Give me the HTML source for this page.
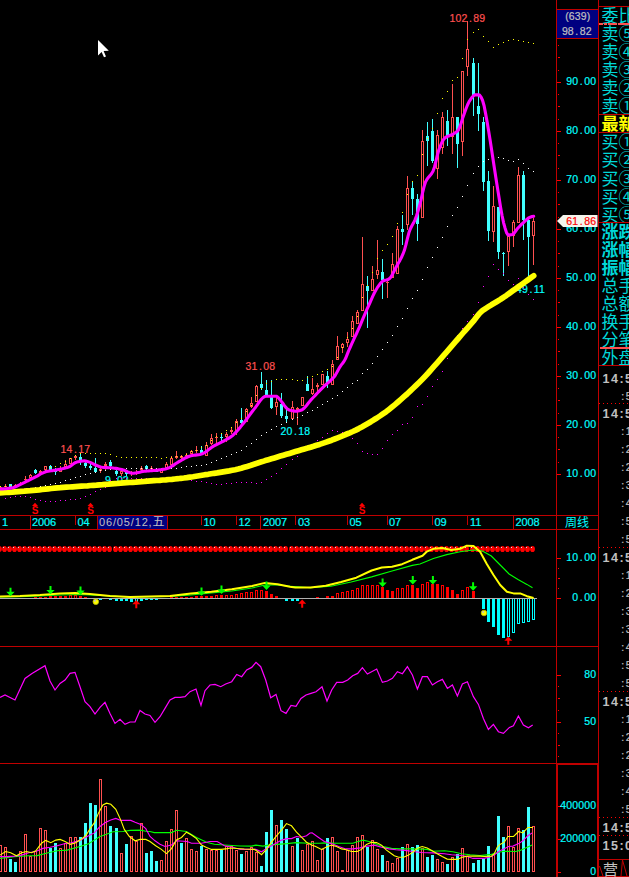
<!DOCTYPE html>
<html lang="zh"><head><meta charset="utf-8"><title>周线</title>
<style>
html,body{margin:0;padding:0;background:#000;}
body{width:629px;height:877px;overflow:hidden;}
svg{display:block;}
text{font-family:"Liberation Sans","Noto Sans CJK SC",sans-serif;}
.ax{font-family:"Liberation Sans","Noto Sans CJK SC",sans-serif;letter-spacing:0.15px;}
.vx{letter-spacing:0;}
.tx{letter-spacing:-0.15px;}
.lab{font-family:"Liberation Sans","Noto Sans CJK SC",sans-serif;letter-spacing:0.15px;}
.cjk{font-family:"Liberation Sans","Noto Sans CJK SC",sans-serif;}
.song{font-family:"Liberation Sans","Noto Sans CJK SC",sans-serif;}
</style></head><body>
<svg width="629" height="877" viewBox="0 0 629 877" shape-rendering="crispEdges">
<rect x="0" y="0" width="629" height="877" fill="#000" />
<g id="main">
<text x="105" y="484" fill="#00FFFF" font-size="10.5" text-anchor="start" class="lab"  stroke="#00FFFF" stroke-width="0.2">9<tspan dx="1.4">.</tspan><tspan dx="1.4">02</tspan></text>
<text x="516" y="293" fill="#00FFFF" font-size="10.5" text-anchor="start" class="lab"  stroke="#00FFFF" stroke-width="0.2">49<tspan dx="1.4">.</tspan><tspan dx="1.4">11</tspan></text>
<rect x="0" y="486" width="1" height="1" fill="#FF5050" />
<rect x="-1" y="487" width="3" height="2" fill="#FF5050" />
<rect x="5" y="484" width="1" height="2" fill="#FF5050" />
<rect x="4" y="486" width="3" height="1" fill="#FF5050" />
<rect x="10" y="484" width="1" height="3" fill="#40FFFF" />
<rect x="9" y="484" width="3" height="3" fill="#40FFFF" />
<rect x="15" y="484" width="1" height="1" fill="#FF5050" />
<rect x="14" y="485" width="3" height="2" fill="#FF5050" />
<rect x="20" y="482" width="1" height="2" fill="#FF5050" />
<rect x="19" y="484" width="3" height="1" fill="#FF5050" />
<rect x="25" y="476" width="1" height="3" fill="#FF5050" />
<rect x="25" y="480" width="1" height="2" fill="#FF5050" />
<rect x="24" y="479" width="3" height="1" fill="#FF5050" />
<rect x="30" y="474" width="1" height="1" fill="#FF5050" />
<rect x="30" y="478" width="1" height="1" fill="#FF5050" />
<rect x="29.5" y="475.5" width="2" height="2" fill="#000" stroke="#FF5050" stroke-width="1"/>
<rect x="35" y="469" width="1" height="5" fill="#40FFFF" />
<rect x="34" y="470" width="3" height="3" fill="#40FFFF" />
<rect x="40" y="470" width="1" height="1" fill="#FF5050" />
<rect x="40" y="473" width="1" height="1" fill="#FF5050" />
<rect x="39" y="471" width="3" height="2" fill="#FF5050" />
<rect x="44.5" y="466.5" width="2" height="3" fill="#000" stroke="#FF5050" stroke-width="1"/>
<rect x="50" y="465" width="1" height="5" fill="#40FFFF" />
<rect x="49" y="466" width="3" height="4" fill="#40FFFF" />
<rect x="55" y="468" width="1" height="7" fill="#40FFFF" />
<rect x="54" y="470" width="3" height="2" fill="#40FFFF" />
<rect x="60" y="466" width="1" height="2" fill="#FF5050" />
<rect x="59.5" y="468.5" width="2" height="3" fill="#000" stroke="#FF5050" stroke-width="1"/>
<rect x="65" y="460" width="1" height="4" fill="#FF5050" />
<rect x="64.5" y="464.5" width="2" height="2" fill="#000" stroke="#FF5050" stroke-width="1"/>
<rect x="69.5" y="458.5" width="2" height="5" fill="#000" stroke="#FF5050" stroke-width="1"/>
<rect x="75" y="455" width="1" height="1" fill="#FF5050" />
<rect x="75" y="458" width="1" height="2" fill="#FF5050" />
<rect x="74" y="456" width="3" height="2" fill="#FF5050" />
<rect x="80" y="453" width="1" height="12" fill="#40FFFF" />
<rect x="79" y="457" width="3" height="3" fill="#40FFFF" />
<rect x="85" y="461" width="1" height="7" fill="#40FFFF" />
<rect x="84" y="463" width="3" height="3" fill="#40FFFF" />
<rect x="90" y="464" width="1" height="6" fill="#40FFFF" />
<rect x="89" y="466" width="3" height="2" fill="#40FFFF" />
<rect x="95" y="458" width="1" height="15" fill="#40FFFF" />
<rect x="94" y="468" width="3" height="4" fill="#40FFFF" />
<rect x="100" y="468" width="1" height="1" fill="#FF5050" />
<rect x="100" y="471" width="1" height="2" fill="#FF5050" />
<rect x="99" y="469" width="3" height="2" fill="#FF5050" />
<rect x="105" y="462" width="1" height="2" fill="#FF5050" />
<rect x="105" y="466" width="1" height="5" fill="#FF5050" />
<rect x="104" y="464" width="3" height="2" fill="#FF5050" />
<rect x="110" y="460" width="1" height="7" fill="#40FFFF" />
<rect x="109" y="462" width="3" height="4" fill="#40FFFF" />
<rect x="116" y="470" width="1" height="6" fill="#40FFFF" />
<rect x="115" y="471" width="3" height="3" fill="#40FFFF" />
<rect x="121" y="470" width="1" height="1" fill="#FF5050" />
<rect x="121" y="474" width="1" height="2" fill="#FF5050" />
<rect x="120.5" y="471.5" width="2" height="2" fill="#000" stroke="#FF5050" stroke-width="1"/>
<rect x="126" y="470" width="1" height="6" fill="#40FFFF" />
<rect x="125" y="471" width="3" height="3" fill="#40FFFF" />
<rect x="131" y="471" width="1" height="1" fill="#FF5050" />
<rect x="131" y="474" width="1" height="2" fill="#FF5050" />
<rect x="130" y="472" width="3" height="2" fill="#FF5050" />
<rect x="136" y="470" width="1" height="2" fill="#FF5050" />
<rect x="136" y="474" width="1" height="1" fill="#FF5050" />
<rect x="135" y="472" width="3" height="2" fill="#FF5050" />
<rect x="141" y="466" width="1" height="2" fill="#FF5050" />
<rect x="141" y="470" width="1" height="1" fill="#FF5050" />
<rect x="140" y="468" width="3" height="2" fill="#FF5050" />
<rect x="146" y="465" width="1" height="5" fill="#40FFFF" />
<rect x="145" y="466" width="3" height="3" fill="#40FFFF" />
<rect x="151" y="466" width="1" height="2" fill="#FF5050" />
<rect x="151" y="469" width="1" height="1" fill="#FF5050" />
<rect x="150" y="468" width="3" height="1" fill="#FF5050" />
<rect x="156" y="468" width="1" height="4" fill="#40FFFF" />
<rect x="155" y="470" width="3" height="2" fill="#40FFFF" />
<rect x="161" y="469" width="1" height="1" fill="#FF5050" />
<rect x="160.5" y="470.5" width="2" height="2" fill="#000" stroke="#FF5050" stroke-width="1"/>
<rect x="166" y="462" width="1" height="2" fill="#FF5050" />
<rect x="165.5" y="464.5" width="2" height="3" fill="#000" stroke="#FF5050" stroke-width="1"/>
<rect x="171" y="456" width="1" height="2" fill="#FF5050" />
<rect x="170.5" y="458.5" width="2" height="6" fill="#000" stroke="#FF5050" stroke-width="1"/>
<rect x="176" y="451" width="1" height="5" fill="#FF5050" />
<rect x="176" y="458" width="1" height="1" fill="#FF5050" />
<rect x="175" y="456" width="3" height="2" fill="#FF5050" />
<rect x="181" y="455" width="1" height="1" fill="#FF5050" />
<rect x="181" y="458" width="1" height="2" fill="#FF5050" />
<rect x="180" y="456" width="3" height="2" fill="#FF5050" />
<rect x="186" y="453" width="1" height="2" fill="#FF5050" />
<rect x="186" y="456" width="1" height="1" fill="#FF5050" />
<rect x="185" y="455" width="3" height="1" fill="#FF5050" />
<rect x="191" y="450" width="1" height="1" fill="#FF5050" />
<rect x="191" y="454" width="1" height="1" fill="#FF5050" />
<rect x="190.5" y="451.5" width="2" height="2" fill="#000" stroke="#FF5050" stroke-width="1"/>
<rect x="196" y="446" width="1" height="4" fill="#FF5050" />
<rect x="196" y="451" width="1" height="2" fill="#FF5050" />
<rect x="195" y="450" width="3" height="1" fill="#FF5050" />
<rect x="201" y="446" width="1" height="7" fill="#40FFFF" />
<rect x="200" y="450" width="3" height="3" fill="#40FFFF" />
<rect x="206" y="442" width="1" height="3" fill="#FF5050" />
<rect x="205.5" y="445.5" width="2" height="10" fill="#000" stroke="#FF5050" stroke-width="1"/>
<rect x="211" y="434" width="1" height="4" fill="#FF5050" />
<rect x="211" y="444" width="1" height="1" fill="#FF5050" />
<rect x="210.5" y="438.5" width="2" height="5" fill="#000" stroke="#FF5050" stroke-width="1"/>
<rect x="216" y="433" width="1" height="4" fill="#FF5050" />
<rect x="216" y="438" width="1" height="5" fill="#FF5050" />
<rect x="215" y="437" width="3" height="1" fill="#FF5050" />
<rect x="221" y="433" width="1" height="8" fill="#40FFFF" />
<rect x="220" y="437" width="3" height="1" fill="#40FFFF" />
<rect x="226" y="432" width="1" height="2" fill="#FF5050" />
<rect x="226" y="437" width="1" height="5" fill="#FF5050" />
<rect x="225.5" y="434.5" width="2" height="2" fill="#000" stroke="#FF5050" stroke-width="1"/>
<rect x="231" y="427" width="1" height="3" fill="#FF5050" />
<rect x="231" y="432" width="1" height="2" fill="#FF5050" />
<rect x="230" y="430" width="3" height="2" fill="#FF5050" />
<rect x="236" y="419" width="1" height="2" fill="#FF5050" />
<rect x="236" y="432" width="1" height="3" fill="#FF5050" />
<rect x="235.5" y="421.5" width="2" height="10" fill="#000" stroke="#FF5050" stroke-width="1"/>
<rect x="241" y="408" width="1" height="18" fill="#40FFFF" />
<rect x="240" y="420" width="3" height="3" fill="#40FFFF" />
<rect x="246" y="408" width="1" height="1" fill="#FF5050" />
<rect x="245.5" y="409.5" width="2" height="12" fill="#000" stroke="#FF5050" stroke-width="1"/>
<rect x="251" y="397" width="1" height="6" fill="#FF5050" />
<rect x="251" y="407" width="1" height="1" fill="#FF5050" />
<rect x="250.5" y="403.5" width="2" height="3" fill="#000" stroke="#FF5050" stroke-width="1"/>
<rect x="256" y="385" width="1" height="1" fill="#FF5050" />
<rect x="255.5" y="386.5" width="2" height="15" fill="#000" stroke="#FF5050" stroke-width="1"/>
<rect x="261" y="372" width="1" height="18" fill="#40FFFF" />
<rect x="260" y="384" width="3" height="4" fill="#40FFFF" />
<rect x="266" y="380" width="1" height="15" fill="#40FFFF" />
<rect x="265" y="390" width="3" height="5" fill="#40FFFF" />
<rect x="271" y="380" width="1" height="29" fill="#40FFFF" />
<rect x="270" y="397" width="3" height="11" fill="#40FFFF" />
<rect x="276" y="398" width="1" height="4" fill="#FF5050" />
<rect x="276" y="407" width="1" height="8" fill="#FF5050" />
<rect x="275.5" y="402.5" width="2" height="4" fill="#000" stroke="#FF5050" stroke-width="1"/>
<rect x="281" y="393" width="1" height="25" fill="#40FFFF" />
<rect x="280" y="404" width="3" height="12" fill="#40FFFF" />
<rect x="286" y="410" width="1" height="13" fill="#40FFFF" />
<rect x="285" y="416" width="3" height="3" fill="#40FFFF" />
<rect x="292" y="401" width="1" height="6" fill="#FF5050" />
<rect x="291.5" y="407.5" width="2" height="11" fill="#000" stroke="#FF5050" stroke-width="1"/>
<rect x="297" y="407" width="1" height="1" fill="#FF5050" />
<rect x="297" y="410" width="1" height="15" fill="#FF5050" />
<rect x="296" y="408" width="3" height="2" fill="#FF5050" />
<rect x="301.5" y="397.5" width="2" height="8" fill="#000" stroke="#FF5050" stroke-width="1"/>
<rect x="307" y="376" width="1" height="15" fill="#40FFFF" />
<rect x="306" y="384" width="3" height="7" fill="#40FFFF" />
<rect x="312" y="378" width="1" height="11" fill="#FF5050" />
<rect x="312" y="394" width="1" height="1" fill="#FF5050" />
<rect x="311.5" y="389.5" width="2" height="4" fill="#000" stroke="#FF5050" stroke-width="1"/>
<rect x="317" y="383" width="1" height="2" fill="#FF5050" />
<rect x="317" y="387" width="1" height="5" fill="#FF5050" />
<rect x="316" y="385" width="3" height="2" fill="#FF5050" />
<rect x="322" y="374" width="1" height="1" fill="#FF5050" />
<rect x="321.5" y="374.5" width="2" height="10" fill="#000" stroke="#FF5050" stroke-width="1"/>
<rect x="327" y="371" width="1" height="17" fill="#40FFFF" />
<rect x="326" y="376" width="3" height="7" fill="#40FFFF" />
<rect x="332" y="360" width="1" height="4" fill="#FF5050" />
<rect x="331.5" y="364.5" width="2" height="20" fill="#000" stroke="#FF5050" stroke-width="1"/>
<rect x="337" y="336" width="1" height="10" fill="#FF5050" />
<rect x="336.5" y="346.5" width="2" height="13" fill="#000" stroke="#FF5050" stroke-width="1"/>
<rect x="342" y="343" width="1" height="1" fill="#FF5050" />
<rect x="342" y="348" width="1" height="5" fill="#FF5050" />
<rect x="341.5" y="344.5" width="2" height="3" fill="#000" stroke="#FF5050" stroke-width="1"/>
<rect x="347" y="332" width="1" height="7" fill="#FF5050" />
<rect x="347" y="343" width="1" height="4" fill="#FF5050" />
<rect x="346.5" y="339.5" width="2" height="3" fill="#000" stroke="#FF5050" stroke-width="1"/>
<rect x="352" y="316" width="1" height="5" fill="#FF5050" />
<rect x="351.5" y="321.5" width="2" height="15" fill="#000" stroke="#FF5050" stroke-width="1"/>
<rect x="357" y="310" width="1" height="2" fill="#FF5050" />
<rect x="356.5" y="312.5" width="2" height="11" fill="#000" stroke="#FF5050" stroke-width="1"/>
<rect x="362" y="237" width="1" height="47" fill="#FF5050" />
<rect x="361.5" y="284.5" width="2" height="26" fill="#000" stroke="#FF5050" stroke-width="1"/>
<rect x="367" y="276" width="1" height="52" fill="#40FFFF" />
<rect x="366" y="286" width="3" height="5" fill="#40FFFF" />
<rect x="372" y="266" width="1" height="13" fill="#FF5050" />
<rect x="371.5" y="279.5" width="2" height="11" fill="#000" stroke="#FF5050" stroke-width="1"/>
<rect x="377" y="240" width="1" height="30" fill="#FF5050" />
<rect x="377" y="275" width="1" height="4" fill="#FF5050" />
<rect x="376.5" y="270.5" width="2" height="4" fill="#000" stroke="#FF5050" stroke-width="1"/>
<rect x="382" y="259" width="1" height="40" fill="#40FFFF" />
<rect x="381" y="272" width="3" height="8" fill="#40FFFF" />
<rect x="387" y="280" width="1" height="2" fill="#FF5050" />
<rect x="387" y="283" width="1" height="15" fill="#FF5050" />
<rect x="386" y="282" width="3" height="1" fill="#FF5050" />
<rect x="392" y="253" width="1" height="11" fill="#FF5050" />
<rect x="391.5" y="264.5" width="2" height="13" fill="#000" stroke="#FF5050" stroke-width="1"/>
<rect x="397" y="226" width="1" height="3" fill="#FF5050" />
<rect x="396.5" y="229.5" width="2" height="44" fill="#000" stroke="#FF5050" stroke-width="1"/>
<rect x="402" y="215" width="1" height="30" fill="#40FFFF" />
<rect x="401" y="229" width="3" height="3" fill="#40FFFF" />
<rect x="407" y="176" width="1" height="12" fill="#FF5050" />
<rect x="407" y="225" width="1" height="5" fill="#FF5050" />
<rect x="406.5" y="188.5" width="2" height="36" fill="#000" stroke="#FF5050" stroke-width="1"/>
<rect x="412" y="181" width="1" height="34" fill="#40FFFF" />
<rect x="411" y="188" width="3" height="11" fill="#40FFFF" />
<rect x="417" y="194" width="1" height="47" fill="#40FFFF" />
<rect x="416" y="199" width="3" height="25" fill="#40FFFF" />
<rect x="422" y="130" width="1" height="11" fill="#FF5050" />
<rect x="421.5" y="141.5" width="2" height="76" fill="#000" stroke="#FF5050" stroke-width="1"/>
<rect x="427" y="122" width="1" height="44" fill="#40FFFF" />
<rect x="426" y="136" width="3" height="5" fill="#40FFFF" />
<rect x="432" y="119" width="1" height="44" fill="#40FFFF" />
<rect x="431" y="131" width="3" height="30" fill="#40FFFF" />
<rect x="437" y="130" width="1" height="5" fill="#FF5050" />
<rect x="437" y="169" width="1" height="10" fill="#FF5050" />
<rect x="436.5" y="135.5" width="2" height="33" fill="#000" stroke="#FF5050" stroke-width="1"/>
<rect x="442" y="112" width="1" height="5" fill="#FF5050" />
<rect x="442" y="148" width="1" height="6" fill="#FF5050" />
<rect x="441.5" y="117.5" width="2" height="30" fill="#000" stroke="#FF5050" stroke-width="1"/>
<rect x="447" y="110" width="1" height="36" fill="#40FFFF" />
<rect x="446" y="121" width="3" height="15" fill="#40FFFF" />
<rect x="452" y="84" width="1" height="33" fill="#FF5050" />
<rect x="452" y="137" width="1" height="17" fill="#FF5050" />
<rect x="451.5" y="117.5" width="2" height="19" fill="#000" stroke="#FF5050" stroke-width="1"/>
<rect x="457" y="117" width="1" height="51" fill="#40FFFF" />
<rect x="456" y="117" width="3" height="27" fill="#40FFFF" />
<rect x="462" y="142" width="1" height="14" fill="#FF5050" />
<rect x="461.5" y="71.5" width="2" height="70" fill="#000" stroke="#FF5050" stroke-width="1"/>
<rect x="467" y="21" width="1" height="28" fill="#FF5050" />
<rect x="467" y="67" width="1" height="9" fill="#FF5050" />
<rect x="466.5" y="49.5" width="2" height="17" fill="#000" stroke="#FF5050" stroke-width="1"/>
<rect x="473" y="58" width="1" height="58" fill="#40FFFF" />
<rect x="472" y="63" width="3" height="32" fill="#40FFFF" />
<rect x="478" y="63" width="1" height="68" fill="#40FFFF" />
<rect x="477" y="106" width="3" height="8" fill="#40FFFF" />
<rect x="483" y="117" width="1" height="74" fill="#40FFFF" />
<rect x="482" y="122" width="3" height="60" fill="#40FFFF" />
<rect x="488" y="171" width="1" height="70" fill="#40FFFF" />
<rect x="487" y="181" width="3" height="50" fill="#40FFFF" />
<rect x="493" y="186" width="1" height="20" fill="#FF5050" />
<rect x="493" y="232" width="1" height="10" fill="#FF5050" />
<rect x="492.5" y="206.5" width="2" height="25" fill="#000" stroke="#FF5050" stroke-width="1"/>
<rect x="498" y="207" width="1" height="52" fill="#40FFFF" />
<rect x="497" y="207" width="3" height="45" fill="#40FFFF" />
<rect x="503" y="252" width="1" height="24" fill="#40FFFF" />
<rect x="502" y="253" width="3" height="1" fill="#40FFFF" />
<rect x="508" y="235" width="1" height="1" fill="#FF5050" />
<rect x="508" y="252" width="1" height="14" fill="#FF5050" />
<rect x="507.5" y="236.5" width="2" height="15" fill="#000" stroke="#FF5050" stroke-width="1"/>
<rect x="513" y="220" width="1" height="2" fill="#FF5050" />
<rect x="513" y="236" width="1" height="11" fill="#FF5050" />
<rect x="512.5" y="222.5" width="2" height="13" fill="#000" stroke="#FF5050" stroke-width="1"/>
<rect x="518" y="167" width="1" height="8" fill="#FF5050" />
<rect x="517.5" y="175.5" width="2" height="47" fill="#000" stroke="#FF5050" stroke-width="1"/>
<rect x="523" y="171" width="1" height="69" fill="#40FFFF" />
<rect x="522" y="175" width="3" height="45" fill="#40FFFF" />
<rect x="528" y="219" width="1" height="57" fill="#40FFFF" />
<rect x="527" y="220" width="3" height="17" fill="#40FFFF" />
<rect x="533" y="218" width="1" height="3" fill="#FF5050" />
<rect x="533" y="236" width="1" height="29" fill="#FF5050" />
<rect x="532.5" y="221.5" width="2" height="14" fill="#000" stroke="#FF5050" stroke-width="1"/>
<rect x="0" y="486" width="1.4" height="1.4" fill="#FFFF00" />
<rect x="5" y="486" width="1.4" height="1.4" fill="#FFFF00" />
<rect x="5" y="498" width="1.4" height="1.4" fill="#FF00FF" />
<rect x="10" y="485" width="1.4" height="1.4" fill="#FFFF00" />
<rect x="10" y="497" width="1.4" height="1.4" fill="#FF00FF" />
<rect x="15" y="485" width="1.4" height="1.4" fill="#FFFF00" />
<rect x="15" y="490" width="1.4" height="1.4" fill="#FFFFFF" />
<rect x="15" y="496" width="1.4" height="1.4" fill="#FF00FF" />
<rect x="20" y="483" width="1.4" height="1.4" fill="#FFFF00" />
<rect x="20" y="489" width="1.4" height="1.4" fill="#FFFFFF" />
<rect x="20" y="496" width="1.4" height="1.4" fill="#FF00FF" />
<rect x="25" y="481" width="1.4" height="1.4" fill="#FFFF00" />
<rect x="25" y="489" width="1.4" height="1.4" fill="#FFFFFF" />
<rect x="25" y="496" width="1.4" height="1.4" fill="#FF00FF" />
<rect x="30" y="479" width="1.4" height="1.4" fill="#FFFF00" />
<rect x="30" y="488" width="1.4" height="1.4" fill="#FFFFFF" />
<rect x="30" y="497" width="1.4" height="1.4" fill="#FF00FF" />
<rect x="35" y="476" width="1.4" height="1.4" fill="#FFFF00" />
<rect x="35" y="487" width="1.4" height="1.4" fill="#FFFFFF" />
<rect x="35" y="499" width="1.4" height="1.4" fill="#FF00FF" />
<rect x="40" y="473" width="1.4" height="1.4" fill="#FFFF00" />
<rect x="40" y="486" width="1.4" height="1.4" fill="#FFFFFF" />
<rect x="40" y="500" width="1.4" height="1.4" fill="#FF00FF" />
<rect x="45" y="470" width="1.4" height="1.4" fill="#FFFF00" />
<rect x="45" y="485" width="1.4" height="1.4" fill="#FFFFFF" />
<rect x="45" y="501" width="1.4" height="1.4" fill="#FF00FF" />
<rect x="50" y="467" width="1.4" height="1.4" fill="#FFFF00" />
<rect x="50" y="484" width="1.4" height="1.4" fill="#FFFFFF" />
<rect x="50" y="501" width="1.4" height="1.4" fill="#FF00FF" />
<rect x="55" y="466" width="1.4" height="1.4" fill="#FFFF00" />
<rect x="55" y="483" width="1.4" height="1.4" fill="#FFFFFF" />
<rect x="55" y="501" width="1.4" height="1.4" fill="#FF00FF" />
<rect x="60" y="463" width="1.4" height="1.4" fill="#FFFF00" />
<rect x="60" y="482" width="1.4" height="1.4" fill="#FFFFFF" />
<rect x="60" y="500" width="1.4" height="1.4" fill="#FF00FF" />
<rect x="65" y="461" width="1.4" height="1.4" fill="#FFFF00" />
<rect x="65" y="480" width="1.4" height="1.4" fill="#FFFFFF" />
<rect x="65" y="500" width="1.4" height="1.4" fill="#FF00FF" />
<rect x="70" y="458" width="1.4" height="1.4" fill="#FFFF00" />
<rect x="70" y="479" width="1.4" height="1.4" fill="#FFFFFF" />
<rect x="70" y="499" width="1.4" height="1.4" fill="#FF00FF" />
<rect x="75" y="455" width="1.4" height="1.4" fill="#FFFF00" />
<rect x="75" y="477" width="1.4" height="1.4" fill="#FFFFFF" />
<rect x="75" y="499" width="1.4" height="1.4" fill="#FF00FF" />
<rect x="80" y="453" width="1.4" height="1.4" fill="#FFFF00" />
<rect x="80" y="476" width="1.4" height="1.4" fill="#FFFFFF" />
<rect x="80" y="498" width="1.4" height="1.4" fill="#FF00FF" />
<rect x="85" y="453" width="1.4" height="1.4" fill="#FFFF00" />
<rect x="85" y="474" width="1.4" height="1.4" fill="#FFFFFF" />
<rect x="85" y="496" width="1.4" height="1.4" fill="#FF00FF" />
<rect x="90" y="453" width="1.4" height="1.4" fill="#FFFF00" />
<rect x="90" y="473" width="1.4" height="1.4" fill="#FFFFFF" />
<rect x="90" y="494" width="1.4" height="1.4" fill="#FF00FF" />
<rect x="95" y="453" width="1.4" height="1.4" fill="#FFFF00" />
<rect x="95" y="472" width="1.4" height="1.4" fill="#FFFFFF" />
<rect x="95" y="491" width="1.4" height="1.4" fill="#FF00FF" />
<rect x="100" y="453" width="1.4" height="1.4" fill="#FFFF00" />
<rect x="100" y="470" width="1.4" height="1.4" fill="#FFFFFF" />
<rect x="100" y="489" width="1.4" height="1.4" fill="#FF00FF" />
<rect x="105" y="453" width="1.4" height="1.4" fill="#FFFF00" />
<rect x="105" y="470" width="1.4" height="1.4" fill="#FFFFFF" />
<rect x="105" y="487" width="1.4" height="1.4" fill="#FF00FF" />
<rect x="110" y="454" width="1.4" height="1.4" fill="#FFFF00" />
<rect x="110" y="469" width="1.4" height="1.4" fill="#FFFFFF" />
<rect x="110" y="480" width="1.4" height="1.4" fill="#FF00FF" />
<rect x="116" y="456" width="1.4" height="1.4" fill="#FFFF00" />
<rect x="116" y="468" width="1.4" height="1.4" fill="#FFFFFF" />
<rect x="116" y="478" width="1.4" height="1.4" fill="#FF00FF" />
<rect x="121" y="457" width="1.4" height="1.4" fill="#FFFF00" />
<rect x="121" y="468" width="1.4" height="1.4" fill="#FFFFFF" />
<rect x="121" y="478" width="1.4" height="1.4" fill="#FF00FF" />
<rect x="126" y="457" width="1.4" height="1.4" fill="#FFFF00" />
<rect x="126" y="468" width="1.4" height="1.4" fill="#FFFFFF" />
<rect x="126" y="478" width="1.4" height="1.4" fill="#FF00FF" />
<rect x="131" y="457" width="1.4" height="1.4" fill="#FFFF00" />
<rect x="131" y="468" width="1.4" height="1.4" fill="#FFFFFF" />
<rect x="131" y="478" width="1.4" height="1.4" fill="#FF00FF" />
<rect x="136" y="457" width="1.4" height="1.4" fill="#FFFF00" />
<rect x="136" y="468" width="1.4" height="1.4" fill="#FFFFFF" />
<rect x="136" y="478" width="1.4" height="1.4" fill="#FF00FF" />
<rect x="141" y="457" width="1.4" height="1.4" fill="#FFFF00" />
<rect x="141" y="468" width="1.4" height="1.4" fill="#FFFFFF" />
<rect x="141" y="478" width="1.4" height="1.4" fill="#FF00FF" />
<rect x="146" y="457" width="1.4" height="1.4" fill="#FFFF00" />
<rect x="146" y="468" width="1.4" height="1.4" fill="#FFFFFF" />
<rect x="146" y="478" width="1.4" height="1.4" fill="#FF00FF" />
<rect x="151" y="457" width="1.4" height="1.4" fill="#FFFF00" />
<rect x="151" y="468" width="1.4" height="1.4" fill="#FFFFFF" />
<rect x="151" y="478" width="1.4" height="1.4" fill="#FF00FF" />
<rect x="156" y="457" width="1.4" height="1.4" fill="#FFFF00" />
<rect x="156" y="468" width="1.4" height="1.4" fill="#FFFFFF" />
<rect x="156" y="478" width="1.4" height="1.4" fill="#FF00FF" />
<rect x="161" y="458" width="1.4" height="1.4" fill="#FFFF00" />
<rect x="161" y="468" width="1.4" height="1.4" fill="#FFFFFF" />
<rect x="161" y="478" width="1.4" height="1.4" fill="#FF00FF" />
<rect x="166" y="457" width="1.4" height="1.4" fill="#FFFF00" />
<rect x="166" y="468" width="1.4" height="1.4" fill="#FFFFFF" />
<rect x="166" y="478" width="1.4" height="1.4" fill="#FF00FF" />
<rect x="171" y="457" width="1.4" height="1.4" fill="#FFFF00" />
<rect x="171" y="468" width="1.4" height="1.4" fill="#FFFFFF" />
<rect x="171" y="478" width="1.4" height="1.4" fill="#FF00FF" />
<rect x="176" y="456" width="1.4" height="1.4" fill="#FFFF00" />
<rect x="176" y="468" width="1.4" height="1.4" fill="#FFFFFF" />
<rect x="176" y="478" width="1.4" height="1.4" fill="#FF00FF" />
<rect x="181" y="456" width="1.4" height="1.4" fill="#FFFF00" />
<rect x="181" y="467" width="1.4" height="1.4" fill="#FFFFFF" />
<rect x="181" y="479" width="1.4" height="1.4" fill="#FF00FF" />
<rect x="186" y="454" width="1.4" height="1.4" fill="#FFFF00" />
<rect x="186" y="466" width="1.4" height="1.4" fill="#FFFFFF" />
<rect x="186" y="479" width="1.4" height="1.4" fill="#FF00FF" />
<rect x="191" y="451" width="1.4" height="1.4" fill="#FFFF00" />
<rect x="191" y="466" width="1.4" height="1.4" fill="#FFFFFF" />
<rect x="191" y="480" width="1.4" height="1.4" fill="#FF00FF" />
<rect x="196" y="450" width="1.4" height="1.4" fill="#FFFF00" />
<rect x="196" y="465" width="1.4" height="1.4" fill="#FFFFFF" />
<rect x="196" y="481" width="1.4" height="1.4" fill="#FF00FF" />
<rect x="201" y="447" width="1.4" height="1.4" fill="#FFFF00" />
<rect x="201" y="465" width="1.4" height="1.4" fill="#FFFFFF" />
<rect x="201" y="481" width="1.4" height="1.4" fill="#FF00FF" />
<rect x="206" y="445" width="1.4" height="1.4" fill="#FFFF00" />
<rect x="206" y="464" width="1.4" height="1.4" fill="#FFFFFF" />
<rect x="206" y="482" width="1.4" height="1.4" fill="#FF00FF" />
<rect x="211" y="440" width="1.4" height="1.4" fill="#FFFF00" />
<rect x="211" y="462" width="1.4" height="1.4" fill="#FFFFFF" />
<rect x="211" y="483" width="1.4" height="1.4" fill="#FF00FF" />
<rect x="216" y="436" width="1.4" height="1.4" fill="#FFFF00" />
<rect x="216" y="460" width="1.4" height="1.4" fill="#FFFFFF" />
<rect x="216" y="484" width="1.4" height="1.4" fill="#FF00FF" />
<rect x="221" y="433" width="1.4" height="1.4" fill="#FFFF00" />
<rect x="221" y="458" width="1.4" height="1.4" fill="#FFFFFF" />
<rect x="221" y="484" width="1.4" height="1.4" fill="#FF00FF" />
<rect x="226" y="430" width="1.4" height="1.4" fill="#FFFF00" />
<rect x="226" y="456" width="1.4" height="1.4" fill="#FFFFFF" />
<rect x="226" y="483" width="1.4" height="1.4" fill="#FF00FF" />
<rect x="231" y="427" width="1.4" height="1.4" fill="#FFFF00" />
<rect x="231" y="454" width="1.4" height="1.4" fill="#FFFFFF" />
<rect x="231" y="483" width="1.4" height="1.4" fill="#FF00FF" />
<rect x="236" y="422" width="1.4" height="1.4" fill="#FFFF00" />
<rect x="236" y="452" width="1.4" height="1.4" fill="#FFFFFF" />
<rect x="236" y="482" width="1.4" height="1.4" fill="#FF00FF" />
<rect x="241" y="418" width="1.4" height="1.4" fill="#FFFF00" />
<rect x="241" y="450" width="1.4" height="1.4" fill="#FFFFFF" />
<rect x="241" y="482" width="1.4" height="1.4" fill="#FF00FF" />
<rect x="246" y="411" width="1.4" height="1.4" fill="#FFFF00" />
<rect x="246" y="446" width="1.4" height="1.4" fill="#FFFFFF" />
<rect x="246" y="482" width="1.4" height="1.4" fill="#FF00FF" />
<rect x="251" y="405" width="1.4" height="1.4" fill="#FFFF00" />
<rect x="251" y="443" width="1.4" height="1.4" fill="#FFFFFF" />
<rect x="251" y="482" width="1.4" height="1.4" fill="#FF00FF" />
<rect x="256" y="395" width="1.4" height="1.4" fill="#FFFF00" />
<rect x="256" y="439" width="1.4" height="1.4" fill="#FFFFFF" />
<rect x="256" y="483" width="1.4" height="1.4" fill="#FF00FF" />
<rect x="261" y="388" width="1.4" height="1.4" fill="#FFFF00" />
<rect x="261" y="435" width="1.4" height="1.4" fill="#FFFFFF" />
<rect x="261" y="482" width="1.4" height="1.4" fill="#FF00FF" />
<rect x="266" y="383" width="1.4" height="1.4" fill="#FFFF00" />
<rect x="266" y="432" width="1.4" height="1.4" fill="#FFFFFF" />
<rect x="266" y="479" width="1.4" height="1.4" fill="#FF00FF" />
<rect x="271" y="381" width="1.4" height="1.4" fill="#FFFF00" />
<rect x="271" y="429" width="1.4" height="1.4" fill="#FFFFFF" />
<rect x="271" y="476" width="1.4" height="1.4" fill="#FF00FF" />
<rect x="276" y="379" width="1.4" height="1.4" fill="#FFFF00" />
<rect x="276" y="426" width="1.4" height="1.4" fill="#FFFFFF" />
<rect x="276" y="473" width="1.4" height="1.4" fill="#FF00FF" />
<rect x="281" y="379" width="1.4" height="1.4" fill="#FFFF00" />
<rect x="281" y="424" width="1.4" height="1.4" fill="#FFFFFF" />
<rect x="281" y="468" width="1.4" height="1.4" fill="#FF00FF" />
<rect x="286" y="379" width="1.4" height="1.4" fill="#FFFF00" />
<rect x="286" y="422" width="1.4" height="1.4" fill="#FFFFFF" />
<rect x="286" y="464" width="1.4" height="1.4" fill="#FF00FF" />
<rect x="292" y="379" width="1.4" height="1.4" fill="#FFFF00" />
<rect x="292" y="419" width="1.4" height="1.4" fill="#FFFFFF" />
<rect x="292" y="459" width="1.4" height="1.4" fill="#FF00FF" />
<rect x="297" y="380" width="1.4" height="1.4" fill="#FFFF00" />
<rect x="297" y="417" width="1.4" height="1.4" fill="#FFFFFF" />
<rect x="297" y="456" width="1.4" height="1.4" fill="#FF00FF" />
<rect x="302" y="380" width="1.4" height="1.4" fill="#FFFF00" />
<rect x="302" y="415" width="1.4" height="1.4" fill="#FFFFFF" />
<rect x="302" y="451" width="1.4" height="1.4" fill="#FF00FF" />
<rect x="307" y="377" width="1.4" height="1.4" fill="#FFFF00" />
<rect x="307" y="412" width="1.4" height="1.4" fill="#FFFFFF" />
<rect x="307" y="447" width="1.4" height="1.4" fill="#FF00FF" />
<rect x="312" y="376" width="1.4" height="1.4" fill="#FFFF00" />
<rect x="312" y="410" width="1.4" height="1.4" fill="#FFFFFF" />
<rect x="312" y="444" width="1.4" height="1.4" fill="#FF00FF" />
<rect x="317" y="374" width="1.4" height="1.4" fill="#FFFF00" />
<rect x="317" y="407" width="1.4" height="1.4" fill="#FFFFFF" />
<rect x="317" y="440" width="1.4" height="1.4" fill="#FF00FF" />
<rect x="322" y="371" width="1.4" height="1.4" fill="#FFFF00" />
<rect x="322" y="404" width="1.4" height="1.4" fill="#FFFFFF" />
<rect x="322" y="437" width="1.4" height="1.4" fill="#FF00FF" />
<rect x="327" y="369" width="1.4" height="1.4" fill="#FFFF00" />
<rect x="327" y="401" width="1.4" height="1.4" fill="#FFFFFF" />
<rect x="327" y="433" width="1.4" height="1.4" fill="#FF00FF" />
<rect x="332" y="366" width="1.4" height="1.4" fill="#FFFF00" />
<rect x="332" y="398" width="1.4" height="1.4" fill="#FFFFFF" />
<rect x="332" y="430" width="1.4" height="1.4" fill="#FF00FF" />
<rect x="337" y="357" width="1.4" height="1.4" fill="#FFFF00" />
<rect x="337" y="395" width="1.4" height="1.4" fill="#FFFFFF" />
<rect x="337" y="431" width="1.4" height="1.4" fill="#FF00FF" />
<rect x="342" y="347" width="1.4" height="1.4" fill="#FFFF00" />
<rect x="342" y="391" width="1.4" height="1.4" fill="#FFFFFF" />
<rect x="342" y="432" width="1.4" height="1.4" fill="#FF00FF" />
<rect x="347" y="337" width="1.4" height="1.4" fill="#FFFF00" />
<rect x="347" y="387" width="1.4" height="1.4" fill="#FFFFFF" />
<rect x="347" y="435" width="1.4" height="1.4" fill="#FF00FF" />
<rect x="352" y="328" width="1.4" height="1.4" fill="#FFFF00" />
<rect x="352" y="383" width="1.4" height="1.4" fill="#FFFFFF" />
<rect x="352" y="438" width="1.4" height="1.4" fill="#FF00FF" />
<rect x="357" y="316" width="1.4" height="1.4" fill="#FFFF00" />
<rect x="357" y="380" width="1.4" height="1.4" fill="#FFFFFF" />
<rect x="357" y="443" width="1.4" height="1.4" fill="#FF00FF" />
<rect x="362" y="297" width="1.4" height="1.4" fill="#FFFF00" />
<rect x="362" y="373" width="1.4" height="1.4" fill="#FFFFFF" />
<rect x="362" y="451" width="1.4" height="1.4" fill="#FF00FF" />
<rect x="367" y="285" width="1.4" height="1.4" fill="#FFFF00" />
<rect x="367" y="369" width="1.4" height="1.4" fill="#FFFFFF" />
<rect x="367" y="453" width="1.4" height="1.4" fill="#FF00FF" />
<rect x="372" y="272" width="1.4" height="1.4" fill="#FFFF00" />
<rect x="372" y="363" width="1.4" height="1.4" fill="#FFFFFF" />
<rect x="372" y="454" width="1.4" height="1.4" fill="#FF00FF" />
<rect x="377" y="258" width="1.4" height="1.4" fill="#FFFF00" />
<rect x="377" y="356" width="1.4" height="1.4" fill="#FFFFFF" />
<rect x="377" y="454" width="1.4" height="1.4" fill="#FF00FF" />
<rect x="382" y="250" width="1.4" height="1.4" fill="#FFFF00" />
<rect x="382" y="349" width="1.4" height="1.4" fill="#FFFFFF" />
<rect x="382" y="448" width="1.4" height="1.4" fill="#FF00FF" />
<rect x="387" y="244" width="1.4" height="1.4" fill="#FFFF00" />
<rect x="387" y="342" width="1.4" height="1.4" fill="#FFFFFF" />
<rect x="387" y="440" width="1.4" height="1.4" fill="#FF00FF" />
<rect x="392" y="236" width="1.4" height="1.4" fill="#FFFF00" />
<rect x="392" y="335" width="1.4" height="1.4" fill="#FFFFFF" />
<rect x="392" y="434" width="1.4" height="1.4" fill="#FF00FF" />
<rect x="397" y="223" width="1.4" height="1.4" fill="#FFFF00" />
<rect x="397" y="326" width="1.4" height="1.4" fill="#FFFFFF" />
<rect x="397" y="430" width="1.4" height="1.4" fill="#FF00FF" />
<rect x="402" y="212" width="1.4" height="1.4" fill="#FFFF00" />
<rect x="402" y="318" width="1.4" height="1.4" fill="#FFFFFF" />
<rect x="402" y="424" width="1.4" height="1.4" fill="#FF00FF" />
<rect x="407" y="194" width="1.4" height="1.4" fill="#FFFF00" />
<rect x="407" y="308" width="1.4" height="1.4" fill="#FFFFFF" />
<rect x="407" y="423" width="1.4" height="1.4" fill="#FF00FF" />
<rect x="412" y="181" width="1.4" height="1.4" fill="#FFFF00" />
<rect x="412" y="298" width="1.4" height="1.4" fill="#FFFFFF" />
<rect x="412" y="417" width="1.4" height="1.4" fill="#FF00FF" />
<rect x="417" y="175" width="1.4" height="1.4" fill="#FFFF00" />
<rect x="417" y="290" width="1.4" height="1.4" fill="#FFFFFF" />
<rect x="417" y="406" width="1.4" height="1.4" fill="#FF00FF" />
<rect x="422" y="154" width="1.4" height="1.4" fill="#FFFF00" />
<rect x="422" y="279" width="1.4" height="1.4" fill="#FFFFFF" />
<rect x="422" y="404" width="1.4" height="1.4" fill="#FF00FF" />
<rect x="427" y="138" width="1.4" height="1.4" fill="#FFFF00" />
<rect x="427" y="267" width="1.4" height="1.4" fill="#FFFFFF" />
<rect x="427" y="396" width="1.4" height="1.4" fill="#FF00FF" />
<rect x="432" y="128" width="1.4" height="1.4" fill="#FFFF00" />
<rect x="432" y="257" width="1.4" height="1.4" fill="#FFFFFF" />
<rect x="432" y="386" width="1.4" height="1.4" fill="#FF00FF" />
<rect x="437" y="113" width="1.4" height="1.4" fill="#FFFF00" />
<rect x="437" y="247" width="1.4" height="1.4" fill="#FFFFFF" />
<rect x="437" y="379" width="1.4" height="1.4" fill="#FF00FF" />
<rect x="442" y="98" width="1.4" height="1.4" fill="#FFFF00" />
<rect x="442" y="237" width="1.4" height="1.4" fill="#FFFFFF" />
<rect x="442" y="371" width="1.4" height="1.4" fill="#FF00FF" />
<rect x="447" y="91" width="1.4" height="1.4" fill="#FFFF00" />
<rect x="447" y="226" width="1.4" height="1.4" fill="#FFFFFF" />
<rect x="447" y="358" width="1.4" height="1.4" fill="#FF00FF" />
<rect x="452" y="80" width="1.4" height="1.4" fill="#FFFF00" />
<rect x="452" y="215" width="1.4" height="1.4" fill="#FFFFFF" />
<rect x="452" y="347" width="1.4" height="1.4" fill="#FF00FF" />
<rect x="457" y="77" width="1.4" height="1.4" fill="#FFFF00" />
<rect x="457" y="207" width="1.4" height="1.4" fill="#FFFFFF" />
<rect x="457" y="335" width="1.4" height="1.4" fill="#FF00FF" />
<rect x="462" y="58" width="1.4" height="1.4" fill="#FFFF00" />
<rect x="462" y="196" width="1.4" height="1.4" fill="#FFFFFF" />
<rect x="462" y="328" width="1.4" height="1.4" fill="#FF00FF" />
<rect x="467" y="39" width="1.4" height="1.4" fill="#FFFF00" />
<rect x="467" y="185" width="1.4" height="1.4" fill="#FFFFFF" />
<rect x="467" y="321" width="1.4" height="1.4" fill="#FF00FF" />
<rect x="473" y="32" width="1.4" height="1.4" fill="#FFFF00" />
<rect x="473" y="173" width="1.4" height="1.4" fill="#FFFFFF" />
<rect x="473" y="314" width="1.4" height="1.4" fill="#FF00FF" />
<rect x="478" y="29" width="1.4" height="1.4" fill="#FFFF00" />
<rect x="478" y="166" width="1.4" height="1.4" fill="#FFFFFF" />
<rect x="478" y="302" width="1.4" height="1.4" fill="#FF00FF" />
<rect x="483" y="36" width="1.4" height="1.4" fill="#FFFF00" />
<rect x="483" y="161" width="1.4" height="1.4" fill="#FFFFFF" />
<rect x="483" y="286" width="1.4" height="1.4" fill="#FF00FF" />
<rect x="488" y="41" width="1.4" height="1.4" fill="#FFFF00" />
<rect x="488" y="159" width="1.4" height="1.4" fill="#FFFFFF" />
<rect x="488" y="276" width="1.4" height="1.4" fill="#FF00FF" />
<rect x="493" y="47" width="1.4" height="1.4" fill="#FFFF00" />
<rect x="493" y="158" width="1.4" height="1.4" fill="#FFFFFF" />
<rect x="493" y="264" width="1.4" height="1.4" fill="#FF00FF" />
<rect x="498" y="44" width="1.4" height="1.4" fill="#FFFF00" />
<rect x="498" y="157" width="1.4" height="1.4" fill="#FFFFFF" />
<rect x="498" y="269" width="1.4" height="1.4" fill="#FF00FF" />
<rect x="503" y="42" width="1.4" height="1.4" fill="#FFFF00" />
<rect x="503" y="158" width="1.4" height="1.4" fill="#FFFFFF" />
<rect x="503" y="273" width="1.4" height="1.4" fill="#FF00FF" />
<rect x="508" y="40" width="1.4" height="1.4" fill="#FFFF00" />
<rect x="508" y="160" width="1.4" height="1.4" fill="#FFFFFF" />
<rect x="508" y="280" width="1.4" height="1.4" fill="#FF00FF" />
<rect x="513" y="39" width="1.4" height="1.4" fill="#FFFF00" />
<rect x="513" y="161" width="1.4" height="1.4" fill="#FFFFFF" />
<rect x="513" y="284" width="1.4" height="1.4" fill="#FF00FF" />
<rect x="518" y="40" width="1.4" height="1.4" fill="#FFFF00" />
<rect x="518" y="159" width="1.4" height="1.4" fill="#FFFFFF" />
<rect x="518" y="278" width="1.4" height="1.4" fill="#FF00FF" />
<rect x="523" y="41" width="1.4" height="1.4" fill="#FFFF00" />
<rect x="523" y="163" width="1.4" height="1.4" fill="#FFFFFF" />
<rect x="523" y="287" width="1.4" height="1.4" fill="#FF00FF" />
<rect x="528" y="42" width="1.4" height="1.4" fill="#FFFF00" />
<rect x="528" y="168" width="1.4" height="1.4" fill="#FFFFFF" />
<rect x="528" y="294" width="1.4" height="1.4" fill="#FF00FF" />
<rect x="533" y="43" width="1.4" height="1.4" fill="#FFFF00" />
<rect x="533" y="171" width="1.4" height="1.4" fill="#FFFFFF" />
<rect x="533" y="299" width="1.4" height="1.4" fill="#FF00FF" />
<polyline points="0.0,492.8 3.0,492.6 6.0,492.5 9.0,492.3 12.1,492.1 15.1,491.8 18.1,491.6 21.1,491.4 24.1,491.2 27.1,490.9 30.2,490.7 33.2,490.4 36.2,490.1 39.2,489.8 42.2,489.4 45.2,489.1 48.2,488.8 51.3,488.5 54.3,488.2 57.3,487.9 60.3,487.7 63.3,487.4 66.3,487.2 69.4,487.0 72.4,486.8 75.4,486.6 78.4,486.4 81.4,486.2 84.4,486.0 87.4,485.8 90.5,485.5 93.5,485.3 96.5,485.1 99.5,484.8 102.5,484.6 105.5,484.3 108.5,484.1 111.6,483.8 114.6,483.6 117.6,483.4 120.6,483.1 123.6,482.9 126.6,482.7 129.7,482.5 132.7,482.3 135.7,482.1 138.7,481.8 141.7,481.6 144.7,481.4 147.7,481.1 150.8,480.9 153.8,480.7 156.8,480.5 159.8,480.3 162.8,480.0 165.8,479.8 168.9,479.5 171.9,479.3 174.9,479.0 177.9,478.7 180.9,478.3 183.9,478.0 186.9,477.6 190.0,477.1 193.0,476.7 196.0,476.2 199.0,475.7 202.0,475.2 205.0,474.7 208.1,474.3 211.1,473.8 214.1,473.3 217.1,472.9 220.1,472.4 223.1,471.9 226.1,471.4 229.2,470.9 232.2,470.3 235.2,469.7 238.2,469.0 241.2,468.2 244.2,467.3 247.3,466.4 250.3,465.5 253.3,464.5 256.3,463.5 259.3,462.5 262.3,461.6 265.3,460.6 268.4,459.7 271.4,458.8 274.4,457.9 277.4,457.0 280.4,456.1 283.4,455.2 286.4,454.3 289.5,453.4 292.5,452.5 295.5,451.6 298.5,450.7 301.5,449.8 304.5,448.9 307.6,448.1 310.6,447.2 313.6,446.3 316.6,445.3 319.6,444.4 322.6,443.4 325.6,442.4 328.7,441.3 331.7,440.2 334.7,439.0 337.7,437.8 340.7,436.6 343.7,435.3 346.8,434.0 349.8,432.8 352.8,431.5 355.8,430.1 358.8,428.6 361.8,427.0 364.8,425.3 367.9,423.5 370.9,421.7 373.9,419.8 376.9,418.0 379.9,416.0 382.9,413.9 386.0,411.8 389.0,409.5 392.0,407.1 395.0,404.6 398.0,402.0 401.0,399.4 404.0,396.7 407.1,394.0 410.1,391.2 413.1,388.3 416.1,385.4 419.1,382.4 422.1,379.4 425.2,376.2 428.2,373.0 431.2,369.6 434.2,366.2 437.2,362.8 440.2,359.4 443.2,355.9 446.3,352.4 449.3,348.9 452.3,345.4 455.3,341.9 458.3,338.5 461.3,335.0 464.3,331.5 467.4,328.1 470.4,324.7 473.4,321.2 476.4,317.3 479.4,313.5 482.4,310.7 485.5,308.6 488.5,306.7 491.5,304.8 494.5,303.0 497.5,301.2 500.5,299.4 503.5,297.3 506.6,295.3 509.6,293.1 512.6,290.9 515.6,288.8 518.6,286.6 521.6,284.5 524.7,282.3 527.7,280.1 530.7,277.9 533.7,275.7" fill="none" stroke="#FFFF00" stroke-width="5.7" stroke-linejoin="round" stroke-linecap="round" shape-rendering="auto"/>
<polyline points="0.0,489.0 1.5,489.0 3.0,488.9 4.5,488.8 6.0,488.7 7.5,488.5 9.0,488.3 10.5,488.1 12.0,487.9 13.5,487.5 15.0,487.0 16.5,486.4 18.0,485.6 19.5,484.9 21.0,484.1 22.6,483.4 24.1,482.7 25.6,481.9 27.1,481.2 28.6,480.5 30.1,479.7 31.6,478.9 33.1,478.2 34.6,477.4 36.1,476.6 37.6,475.8 39.1,474.9 40.6,474.0 42.1,473.2 43.6,472.6 45.1,472.0 46.6,471.6 48.1,471.3 49.6,471.0 51.1,470.8 52.6,470.6 54.1,470.3 55.6,470.1 57.1,469.8 58.6,469.5 60.1,469.2 61.6,468.9 63.1,468.6 64.6,468.2 66.1,467.8 67.7,467.4 69.2,466.8 70.7,465.9 72.2,464.8 73.7,463.6 75.2,462.7 76.7,462.1 78.2,461.7 79.7,461.4 81.2,461.1 82.7,461.0 84.2,460.9 85.7,461.1 87.2,461.4 88.7,461.9 90.2,462.4 91.7,463.1 93.2,463.9 94.7,464.7 96.2,465.3 97.7,465.9 99.2,466.5 100.7,467.0 102.2,467.3 103.7,467.5 105.2,467.5 106.7,467.6 108.2,467.7 109.7,467.7 111.3,467.8 112.8,468.0 114.3,468.2 115.8,468.4 117.3,468.6 118.8,468.9 120.3,469.2 121.8,469.5 123.3,469.9 124.8,470.5 126.3,471.2 127.8,471.9 129.3,472.5 130.8,472.9 132.3,473.2 133.8,473.2 135.3,473.0 136.8,472.8 138.3,472.5 139.8,472.2 141.3,471.8 142.8,471.5 144.3,471.3 145.8,471.1 147.3,471.0 148.8,470.9 150.3,470.8 151.8,470.7 153.3,470.5 154.8,470.4 156.4,470.2 157.9,470.1 159.4,469.9 160.9,469.7 162.4,469.4 163.9,469.2 165.4,468.9 166.9,468.5 168.4,468.1 169.9,467.4 171.4,466.5 172.9,465.6 174.4,464.6 175.9,463.5 177.4,462.6 178.9,461.7 180.4,460.8 181.9,460.0 183.4,459.1 184.9,458.2 186.4,457.5 187.9,456.8 189.4,456.2 190.9,455.8 192.4,455.5 193.9,455.3 195.4,455.1 196.9,454.9 198.4,454.7 199.9,454.4 201.5,454.0 203.0,453.5 204.5,452.7 206.0,451.7 207.5,450.6 209.0,449.4 210.5,448.2 212.0,447.1 213.5,446.2 215.0,445.4 216.5,444.6 218.0,443.8 219.5,443.1 221.0,442.3 222.5,441.6 224.0,440.8 225.5,440.0 227.0,439.2 228.5,438.3 230.0,437.4 231.5,436.4 233.0,435.2 234.5,433.7 236.0,432.2 237.5,430.5 239.0,428.7 240.5,426.9 242.0,425.0 243.5,423.2 245.1,421.3 246.6,419.3 248.1,417.2 249.6,415.1 251.1,413.0 252.6,411.0 254.1,409.1 255.6,407.2 257.1,405.1 258.6,402.9 260.1,400.8 261.6,399.0 263.1,397.5 264.6,396.6 266.1,396.3 267.6,396.3 269.1,396.3 270.6,396.3 272.1,396.3 273.6,396.3 275.1,396.3 276.6,396.3 278.1,397.4 279.6,399.3 281.1,401.1 282.6,403.0 284.1,405.1 285.6,407.1 287.1,408.7 288.6,409.7 290.2,410.2 291.7,410.6 293.2,410.9 294.7,411.1 296.2,411.2 297.7,411.1 299.2,410.8 300.7,410.3 302.2,409.7 303.7,408.6 305.2,407.0 306.7,405.2 308.2,403.3 309.7,401.4 311.2,399.6 312.7,398.0 314.2,396.5 315.7,394.9 317.2,393.3 318.7,391.7 320.2,390.1 321.7,388.6 323.2,387.1 324.7,385.7 326.2,384.3 327.7,383.1 329.2,381.8 330.7,380.4 332.2,378.9 333.8,377.2 335.3,375.2 336.8,372.6 338.3,369.8 339.8,367.1 341.3,364.9 342.8,363.0 344.3,360.9 345.8,358.0 347.3,354.1 348.8,350.4 350.3,347.0 351.8,343.7 353.3,340.4 354.8,337.2 356.3,334.0 357.8,330.7 359.3,327.3 360.8,323.8 362.3,320.2 363.8,316.7 365.3,313.2 366.8,309.7 368.3,306.4 369.8,303.0 371.3,299.6 372.8,296.2 374.3,293.0 375.8,290.2 377.3,287.7 378.9,285.5 380.4,283.4 381.9,281.8 383.4,280.8 384.9,280.3 386.4,280.0 387.9,279.6 389.4,278.7 390.9,277.0 392.4,274.4 393.9,271.5 395.4,268.5 396.9,265.7 398.4,263.1 399.9,260.4 401.4,257.5 402.9,254.2 404.4,250.3 405.9,244.9 407.4,238.6 408.9,232.8 410.4,228.8 411.9,225.8 413.4,223.1 414.9,220.1 416.4,216.2 417.9,211.5 419.4,206.3 420.9,200.4 422.4,193.5 424.0,186.9 425.5,182.1 427.0,179.3 428.5,177.3 430.0,175.6 431.5,173.7 433.0,171.2 434.5,166.9 436.0,160.8 437.5,154.5 439.0,149.5 440.5,145.6 442.0,142.2 443.5,139.5 445.0,137.9 446.5,136.9 448.0,136.2 449.5,135.7 451.0,135.0 452.5,134.3 454.0,133.5 455.5,132.6 457.0,131.5 458.5,129.9 460.0,126.5 461.5,121.9 463.0,117.1 464.5,113.0 466.0,108.8 467.6,104.7 469.1,101.6 470.6,99.3 472.1,97.2 473.6,95.6 475.1,94.9 476.6,94.9 478.1,94.9 479.6,95.1 481.1,97.1 482.6,100.5 484.1,105.7 485.6,113.6 487.1,121.9 488.6,130.8 490.1,140.1 491.6,149.8 493.1,159.7 494.6,169.6 496.1,179.2 497.6,188.7 499.1,198.1 500.6,207.5 502.1,215.8 503.6,222.8 505.1,228.2 506.6,232.9 508.1,235.0 509.6,234.9 511.1,234.7 512.7,234.4 514.2,233.0 515.7,231.0 517.2,228.9 518.7,227.3 520.2,225.7 521.7,224.2 523.2,222.8 524.7,221.4 526.2,219.9 527.7,218.6 529.2,217.6 530.7,217.0 532.2,216.5 533.7,216.2" fill="none" stroke="#FF00FF" stroke-width="3.1" stroke-linejoin="round" stroke-linecap="round" shape-rendering="auto"/>
<text x="60.5" y="453" fill="#FF5050" font-size="10.5" text-anchor="start" class="lab"  stroke="#FF5050" stroke-width="0.2">14<tspan dx="1.4">.</tspan><tspan dx="1.4">17</tspan></text>
<text x="245.5" y="370" fill="#FF5050" font-size="10.5" text-anchor="start" class="lab"  stroke="#FF5050" stroke-width="0.2">31<tspan dx="1.4">.</tspan><tspan dx="1.4">08</tspan></text>
<text x="280.5" y="435" fill="#00FFFF" font-size="10.5" text-anchor="start" class="lab"  stroke="#00FFFF" stroke-width="0.2">20<tspan dx="1.4">.</tspan><tspan dx="1.4">18</tspan></text>
<text x="449.5" y="22.3" fill="#FF5050" font-size="10.5" text-anchor="start" class="lab"  stroke="#FF5050" stroke-width="0.2">102<tspan dx="1.4">.</tspan><tspan dx="1.4">89</tspan></text>
<polygon points="32,506 35,502.7 38,506" fill="#FF0000" shape-rendering="auto"/>
<text x="35" y="514.2" fill="#FF0000" font-size="10" text-anchor="middle" font-weight="bold">S</text>
<polygon points="87.5,506 90.5,502.7 93.5,506" fill="#FF0000" shape-rendering="auto"/>
<text x="90.5" y="514.2" fill="#FF0000" font-size="10" text-anchor="middle" font-weight="bold">S</text>
<polygon points="359,506 362,502.7 365,506" fill="#FF0000" shape-rendering="auto"/>
<text x="362" y="514.2" fill="#FF0000" font-size="10" text-anchor="middle" font-weight="bold">S</text>
<path d="M98 40 L98 55.4 L101.6 52 L104 57.2 L106 56.4 L103.6 51 L108.8 50.8 Z" fill="#fff" shape-rendering="auto"/>
</g>
<g id="frame">
<rect x="556" y="0" width="1" height="763" fill="#C00000" />
<rect x="556" y="763" width="2" height="114" fill="#C00000" />
<rect x="598" y="0" width="1" height="763" fill="#C00000" />
<rect x="597" y="763" width="2" height="114" fill="#C00000" />
<rect x="0" y="515" width="598" height="1" fill="#C00000" />
<rect x="0" y="529" width="598" height="1" fill="#C00000" />
<rect x="0" y="646" width="556" height="1" fill="#C00000" />
<rect x="556" y="646" width="42" height="1" fill="#C00000" />
<rect x="0" y="763" width="556" height="1" fill="#C00000" />
<rect x="556" y="763" width="43" height="2" fill="#C00000" />
<rect x="598" y="6" width="31" height="1" fill="#C00000" />
</g>
<g id="paxis">
<rect x="558" y="462" width="1" height="1" fill="#FF0000" />
<rect x="558" y="449" width="2" height="1" fill="#FF0000" />
<rect x="558" y="437" width="1" height="1" fill="#FF0000" />
<rect x="558" y="413" width="1" height="1" fill="#FF0000" />
<rect x="558" y="400" width="2" height="1" fill="#FF0000" />
<rect x="558" y="388" width="1" height="1" fill="#FF0000" />
<rect x="558" y="364" width="1" height="1" fill="#FF0000" />
<rect x="558" y="351" width="2" height="1" fill="#FF0000" />
<rect x="558" y="339" width="1" height="1" fill="#FF0000" />
<rect x="558" y="315" width="1" height="1" fill="#FF0000" />
<rect x="558" y="302" width="2" height="1" fill="#FF0000" />
<rect x="558" y="290" width="1" height="1" fill="#FF0000" />
<rect x="558" y="266" width="1" height="1" fill="#FF0000" />
<rect x="558" y="253" width="2" height="1" fill="#FF0000" />
<rect x="558" y="241" width="1" height="1" fill="#FF0000" />
<rect x="558" y="217" width="1" height="1" fill="#FF0000" />
<rect x="558" y="204" width="2" height="1" fill="#FF0000" />
<rect x="558" y="192" width="1" height="1" fill="#FF0000" />
<rect x="558" y="168" width="1" height="1" fill="#FF0000" />
<rect x="558" y="155" width="2" height="1" fill="#FF0000" />
<rect x="558" y="143" width="1" height="1" fill="#FF0000" />
<rect x="558" y="119" width="1" height="1" fill="#FF0000" />
<rect x="558" y="106" width="2" height="1" fill="#FF0000" />
<rect x="558" y="94" width="1" height="1" fill="#FF0000" />
<rect x="558" y="70" width="1" height="1" fill="#FF0000" />
<rect x="558" y="57" width="2" height="1" fill="#FF0000" />
<rect x="558" y="45" width="1" height="1" fill="#FF0000" />
<rect x="558" y="21" width="1" height="1" fill="#FF0000" />
<rect x="557" y="474" width="4" height="1" fill="#FF0000" />
<text x="596.2" y="477.3" fill="#00FFFF" font-size="10.5" text-anchor="end" class="ax"  stroke="#00FFFF" stroke-width="0.2">10<tspan dx="1.4">.</tspan><tspan dx="1.4">00</tspan></text>
<rect x="557" y="425" width="4" height="1" fill="#FF0000" />
<text x="596.2" y="428.3" fill="#00FFFF" font-size="10.5" text-anchor="end" class="ax"  stroke="#00FFFF" stroke-width="0.2">20<tspan dx="1.4">.</tspan><tspan dx="1.4">00</tspan></text>
<rect x="557" y="376" width="4" height="1" fill="#FF0000" />
<text x="596.2" y="379.3" fill="#00FFFF" font-size="10.5" text-anchor="end" class="ax"  stroke="#00FFFF" stroke-width="0.2">30<tspan dx="1.4">.</tspan><tspan dx="1.4">00</tspan></text>
<rect x="557" y="327" width="4" height="1" fill="#FF0000" />
<text x="596.2" y="330.3" fill="#00FFFF" font-size="10.5" text-anchor="end" class="ax"  stroke="#00FFFF" stroke-width="0.2">40<tspan dx="1.4">.</tspan><tspan dx="1.4">00</tspan></text>
<rect x="557" y="278" width="4" height="1" fill="#FF0000" />
<text x="596.2" y="281.3" fill="#00FFFF" font-size="10.5" text-anchor="end" class="ax"  stroke="#00FFFF" stroke-width="0.2">50<tspan dx="1.4">.</tspan><tspan dx="1.4">00</tspan></text>
<rect x="557" y="229" width="4" height="1" fill="#FF0000" />
<text x="596.2" y="232.3" fill="#00FFFF" font-size="10.5" text-anchor="end" class="ax"  stroke="#00FFFF" stroke-width="0.2">60<tspan dx="1.4">.</tspan><tspan dx="1.4">00</tspan></text>
<rect x="557" y="180" width="4" height="1" fill="#FF0000" />
<text x="596.2" y="183.3" fill="#00FFFF" font-size="10.5" text-anchor="end" class="ax"  stroke="#00FFFF" stroke-width="0.2">70<tspan dx="1.4">.</tspan><tspan dx="1.4">00</tspan></text>
<rect x="557" y="131" width="4" height="1" fill="#FF0000" />
<text x="596.2" y="134.3" fill="#00FFFF" font-size="10.5" text-anchor="end" class="ax"  stroke="#00FFFF" stroke-width="0.2">80<tspan dx="1.4">.</tspan><tspan dx="1.4">00</tspan></text>
<rect x="557" y="82" width="4" height="1" fill="#FF0000" />
<text x="596.2" y="85.3" fill="#00FFFF" font-size="10.5" text-anchor="end" class="ax"  stroke="#00FFFF" stroke-width="0.2">90<tspan dx="1.4">.</tspan><tspan dx="1.4">00</tspan></text>
<rect x="557" y="10" width="41" height="28" fill="#000080" />
<rect x="557" y="9" width="41" height="1" fill="#C00000" />
<rect x="557" y="38" width="41" height="1" fill="#C00000" />
<text x="577.8" y="19.8" fill="#C0C0C0" font-size="10.5" text-anchor="middle" class="ax"  stroke="#C0C0C0" stroke-width="0.2">(639)</text>
<text x="576.8" y="35" fill="#C0C0C0" font-size="10.5" text-anchor="middle" class="ax"  stroke="#C0C0C0" stroke-width="0.2">98<tspan dx="1.4">.</tspan><tspan dx="1.4">82</tspan></text>
<polygon points="557,221 563,215 597.5,215 597.5,227 563,227" fill="#F4F4EC" shape-rendering="auto"/>
<text x="596.2" y="225" fill="#FF0000" font-size="10.5" text-anchor="end" class="ax"  stroke="#FF0000" stroke-width="0.2">61<tspan dx="1.4">.</tspan><tspan dx="1.4">86</tspan></text>
</g>
<g id="taxis">
<rect x="30" y="515" width="1" height="14" fill="#C00000" />
<rect x="75" y="515" width="1" height="10" fill="#C00000" />
<rect x="201" y="515" width="1" height="10" fill="#C00000" />
<rect x="236" y="515" width="1" height="10" fill="#C00000" />
<rect x="260" y="515" width="1" height="14" fill="#C00000" />
<rect x="295" y="515" width="1" height="10" fill="#C00000" />
<rect x="347" y="515" width="1" height="10" fill="#C00000" />
<rect x="387" y="515" width="1" height="10" fill="#C00000" />
<rect x="432" y="515" width="1" height="10" fill="#C00000" />
<rect x="467" y="515" width="1" height="10" fill="#C00000" />
<rect x="513" y="515" width="1" height="14" fill="#C00000" />
<text x="2" y="526" fill="#00FFFF" font-size="11" text-anchor="start" class="tx"  stroke="#00FFFF" stroke-width="0.2">1</text>
<text x="32" y="526" fill="#00FFFF" font-size="11" text-anchor="start" class="tx"  stroke="#00FFFF" stroke-width="0.2">2006</text>
<text x="77.5" y="526" fill="#00FFFF" font-size="11" text-anchor="start" class="tx"  stroke="#00FFFF" stroke-width="0.2">04</text>
<text x="203.5" y="526" fill="#00FFFF" font-size="11" text-anchor="start" class="tx"  stroke="#00FFFF" stroke-width="0.2">10</text>
<text x="238.5" y="526" fill="#00FFFF" font-size="11" text-anchor="start" class="tx"  stroke="#00FFFF" stroke-width="0.2">12</text>
<text x="263" y="526" fill="#00FFFF" font-size="11" text-anchor="start" class="tx"  stroke="#00FFFF" stroke-width="0.2">2007</text>
<text x="298" y="526" fill="#00FFFF" font-size="11" text-anchor="start" class="tx"  stroke="#00FFFF" stroke-width="0.2">03</text>
<text x="349.5" y="526" fill="#00FFFF" font-size="11" text-anchor="start" class="tx"  stroke="#00FFFF" stroke-width="0.2">05</text>
<text x="389" y="526" fill="#00FFFF" font-size="11" text-anchor="start" class="tx"  stroke="#00FFFF" stroke-width="0.2">07</text>
<text x="434.5" y="526" fill="#00FFFF" font-size="11" text-anchor="start" class="tx"  stroke="#00FFFF" stroke-width="0.2">09</text>
<text x="470" y="526" fill="#00FFFF" font-size="11" text-anchor="start" class="tx"  stroke="#00FFFF" stroke-width="0.2">11</text>
<text x="515.5" y="526" fill="#00FFFF" font-size="11" text-anchor="start" class="tx"  stroke="#00FFFF" stroke-width="0.2">2008</text>
<rect x="97" y="516" width="70" height="13" fill="#000080" />
<rect x="97" y="515" width="1" height="14" fill="#C00000" />
<rect x="167" y="515" width="1" height="14" fill="#C00000" />
<text x="99" y="526" fill="#C0C0C0" font-size="11" class="ax" style="letter-spacing:0.85px">06/05/12,<tspan class="cjk" font-size="12">五</tspan></text>
<text x="577" y="526.5" fill="#00FFFF" font-size="12" text-anchor="middle" class="cjk">周线</text>
</g>
<g id="macd">
<ellipse cx="-0.5" cy="549" rx="2.45" ry="3.1" fill="#FF0000" shape-rendering="auto"/>
<rect x="-2.0" y="547" width="1" height="1" fill="#C8E8E8"/>
<ellipse cx="4.5" cy="549" rx="2.45" ry="3.1" fill="#FF0000" shape-rendering="auto"/>
<rect x="3.0" y="547" width="1" height="1" fill="#C8E8E8"/>
<ellipse cx="9.5" cy="549" rx="2.45" ry="3.1" fill="#FF0000" shape-rendering="auto"/>
<rect x="8.0" y="547" width="1" height="1" fill="#C8E8E8"/>
<ellipse cx="14.5" cy="549" rx="2.45" ry="3.1" fill="#FF0000" shape-rendering="auto"/>
<rect x="13.0" y="547" width="1" height="1" fill="#C8E8E8"/>
<ellipse cx="19.5" cy="549" rx="2.45" ry="3.1" fill="#FF0000" shape-rendering="auto"/>
<rect x="18.0" y="547" width="1" height="1" fill="#C8E8E8"/>
<ellipse cx="24.5" cy="549" rx="2.45" ry="3.1" fill="#FF0000" shape-rendering="auto"/>
<rect x="23.0" y="547" width="1" height="1" fill="#C8E8E8"/>
<ellipse cx="29.5" cy="549" rx="2.45" ry="3.1" fill="#FF0000" shape-rendering="auto"/>
<rect x="28.0" y="547" width="1" height="1" fill="#C8E8E8"/>
<ellipse cx="34.5" cy="549" rx="2.45" ry="3.1" fill="#FF0000" shape-rendering="auto"/>
<rect x="33.0" y="547" width="1" height="1" fill="#C8E8E8"/>
<ellipse cx="39.5" cy="549" rx="2.45" ry="3.1" fill="#FF0000" shape-rendering="auto"/>
<rect x="38.0" y="547" width="1" height="1" fill="#C8E8E8"/>
<ellipse cx="44.5" cy="549" rx="2.45" ry="3.1" fill="#FF0000" shape-rendering="auto"/>
<rect x="43.0" y="547" width="1" height="1" fill="#C8E8E8"/>
<ellipse cx="49.5" cy="549" rx="2.45" ry="3.1" fill="#FF0000" shape-rendering="auto"/>
<rect x="48.0" y="547" width="1" height="1" fill="#C8E8E8"/>
<ellipse cx="54.5" cy="549" rx="2.45" ry="3.1" fill="#FF0000" shape-rendering="auto"/>
<rect x="53.0" y="547" width="1" height="1" fill="#C8E8E8"/>
<ellipse cx="59.5" cy="549" rx="2.45" ry="3.1" fill="#FF0000" shape-rendering="auto"/>
<rect x="58.0" y="547" width="1" height="1" fill="#C8E8E8"/>
<ellipse cx="64.5" cy="549" rx="2.45" ry="3.1" fill="#FF0000" shape-rendering="auto"/>
<rect x="63.0" y="547" width="1" height="1" fill="#C8E8E8"/>
<ellipse cx="69.5" cy="549" rx="2.45" ry="3.1" fill="#FF0000" shape-rendering="auto"/>
<rect x="68.0" y="547" width="1" height="1" fill="#C8E8E8"/>
<ellipse cx="74.5" cy="549" rx="2.45" ry="3.1" fill="#FF0000" shape-rendering="auto"/>
<rect x="73.0" y="547" width="1" height="1" fill="#C8E8E8"/>
<ellipse cx="79.5" cy="549" rx="2.45" ry="3.1" fill="#FF0000" shape-rendering="auto"/>
<rect x="78.0" y="547" width="1" height="1" fill="#C8E8E8"/>
<ellipse cx="84.5" cy="549" rx="2.45" ry="3.1" fill="#FF0000" shape-rendering="auto"/>
<rect x="83.0" y="547" width="1" height="1" fill="#C8E8E8"/>
<ellipse cx="89.5" cy="549" rx="2.45" ry="3.1" fill="#FF0000" shape-rendering="auto"/>
<rect x="88.0" y="547" width="1" height="1" fill="#C8E8E8"/>
<ellipse cx="94.5" cy="549" rx="2.45" ry="3.1" fill="#FF0000" shape-rendering="auto"/>
<rect x="93.0" y="547" width="1" height="1" fill="#C8E8E8"/>
<ellipse cx="99.5" cy="549" rx="2.45" ry="3.1" fill="#FF0000" shape-rendering="auto"/>
<rect x="98.0" y="547" width="1" height="1" fill="#C8E8E8"/>
<ellipse cx="104.5" cy="549" rx="2.45" ry="3.1" fill="#FF0000" shape-rendering="auto"/>
<rect x="103.0" y="547" width="1" height="1" fill="#C8E8E8"/>
<ellipse cx="109.5" cy="549" rx="2.45" ry="3.1" fill="#FF0000" shape-rendering="auto"/>
<rect x="108.0" y="547" width="1" height="1" fill="#C8E8E8"/>
<ellipse cx="115.5" cy="549" rx="2.45" ry="3.1" fill="#FF0000" shape-rendering="auto"/>
<rect x="114.0" y="547" width="1" height="1" fill="#C8E8E8"/>
<ellipse cx="120.5" cy="549" rx="2.45" ry="3.1" fill="#FF0000" shape-rendering="auto"/>
<rect x="119.0" y="547" width="1" height="1" fill="#C8E8E8"/>
<ellipse cx="125.5" cy="549" rx="2.45" ry="3.1" fill="#FF0000" shape-rendering="auto"/>
<rect x="124.0" y="547" width="1" height="1" fill="#C8E8E8"/>
<ellipse cx="130.5" cy="549" rx="2.45" ry="3.1" fill="#FF0000" shape-rendering="auto"/>
<rect x="129.0" y="547" width="1" height="1" fill="#C8E8E8"/>
<ellipse cx="135.5" cy="549" rx="2.45" ry="3.1" fill="#FF0000" shape-rendering="auto"/>
<rect x="134.0" y="547" width="1" height="1" fill="#C8E8E8"/>
<ellipse cx="140.5" cy="549" rx="2.45" ry="3.1" fill="#FF0000" shape-rendering="auto"/>
<rect x="139.0" y="547" width="1" height="1" fill="#C8E8E8"/>
<ellipse cx="145.5" cy="549" rx="2.45" ry="3.1" fill="#FF0000" shape-rendering="auto"/>
<rect x="144.0" y="547" width="1" height="1" fill="#C8E8E8"/>
<ellipse cx="150.5" cy="549" rx="2.45" ry="3.1" fill="#FF0000" shape-rendering="auto"/>
<rect x="149.0" y="547" width="1" height="1" fill="#C8E8E8"/>
<ellipse cx="155.5" cy="549" rx="2.45" ry="3.1" fill="#FF0000" shape-rendering="auto"/>
<rect x="154.0" y="547" width="1" height="1" fill="#C8E8E8"/>
<ellipse cx="160.5" cy="549" rx="2.45" ry="3.1" fill="#FF0000" shape-rendering="auto"/>
<rect x="159.0" y="547" width="1" height="1" fill="#C8E8E8"/>
<ellipse cx="165.5" cy="549" rx="2.45" ry="3.1" fill="#FF0000" shape-rendering="auto"/>
<rect x="164.0" y="547" width="1" height="1" fill="#C8E8E8"/>
<ellipse cx="170.5" cy="549" rx="2.45" ry="3.1" fill="#FF0000" shape-rendering="auto"/>
<rect x="169.0" y="547" width="1" height="1" fill="#C8E8E8"/>
<ellipse cx="175.5" cy="549" rx="2.45" ry="3.1" fill="#FF0000" shape-rendering="auto"/>
<rect x="174.0" y="547" width="1" height="1" fill="#C8E8E8"/>
<ellipse cx="180.5" cy="549" rx="2.45" ry="3.1" fill="#FF0000" shape-rendering="auto"/>
<rect x="179.0" y="547" width="1" height="1" fill="#C8E8E8"/>
<ellipse cx="185.5" cy="549" rx="2.45" ry="3.1" fill="#FF0000" shape-rendering="auto"/>
<rect x="184.0" y="547" width="1" height="1" fill="#C8E8E8"/>
<ellipse cx="190.5" cy="549" rx="2.45" ry="3.1" fill="#FF0000" shape-rendering="auto"/>
<rect x="189.0" y="547" width="1" height="1" fill="#C8E8E8"/>
<ellipse cx="195.5" cy="549" rx="2.45" ry="3.1" fill="#FF0000" shape-rendering="auto"/>
<rect x="194.0" y="547" width="1" height="1" fill="#C8E8E8"/>
<ellipse cx="200.5" cy="549" rx="2.45" ry="3.1" fill="#FF0000" shape-rendering="auto"/>
<rect x="199.0" y="547" width="1" height="1" fill="#C8E8E8"/>
<ellipse cx="205.5" cy="549" rx="2.45" ry="3.1" fill="#FF0000" shape-rendering="auto"/>
<rect x="204.0" y="547" width="1" height="1" fill="#C8E8E8"/>
<ellipse cx="210.5" cy="549" rx="2.45" ry="3.1" fill="#FF0000" shape-rendering="auto"/>
<rect x="209.0" y="547" width="1" height="1" fill="#C8E8E8"/>
<ellipse cx="215.5" cy="549" rx="2.45" ry="3.1" fill="#FF0000" shape-rendering="auto"/>
<rect x="214.0" y="547" width="1" height="1" fill="#C8E8E8"/>
<ellipse cx="220.5" cy="549" rx="2.45" ry="3.1" fill="#FF0000" shape-rendering="auto"/>
<rect x="219.0" y="547" width="1" height="1" fill="#C8E8E8"/>
<ellipse cx="225.5" cy="549" rx="2.45" ry="3.1" fill="#FF0000" shape-rendering="auto"/>
<rect x="224.0" y="547" width="1" height="1" fill="#C8E8E8"/>
<ellipse cx="230.5" cy="549" rx="2.45" ry="3.1" fill="#FF0000" shape-rendering="auto"/>
<rect x="229.0" y="547" width="1" height="1" fill="#C8E8E8"/>
<ellipse cx="235.5" cy="549" rx="2.45" ry="3.1" fill="#FF0000" shape-rendering="auto"/>
<rect x="234.0" y="547" width="1" height="1" fill="#C8E8E8"/>
<ellipse cx="240.5" cy="549" rx="2.45" ry="3.1" fill="#FF0000" shape-rendering="auto"/>
<rect x="239.0" y="547" width="1" height="1" fill="#C8E8E8"/>
<ellipse cx="245.5" cy="549" rx="2.45" ry="3.1" fill="#FF0000" shape-rendering="auto"/>
<rect x="244.0" y="547" width="1" height="1" fill="#C8E8E8"/>
<ellipse cx="250.5" cy="549" rx="2.45" ry="3.1" fill="#FF0000" shape-rendering="auto"/>
<rect x="249.0" y="547" width="1" height="1" fill="#C8E8E8"/>
<ellipse cx="255.5" cy="549" rx="2.45" ry="3.1" fill="#FF0000" shape-rendering="auto"/>
<rect x="254.0" y="547" width="1" height="1" fill="#C8E8E8"/>
<ellipse cx="260.5" cy="549" rx="2.45" ry="3.1" fill="#FF0000" shape-rendering="auto"/>
<rect x="259.0" y="547" width="1" height="1" fill="#C8E8E8"/>
<ellipse cx="265.5" cy="549" rx="2.45" ry="3.1" fill="#FF0000" shape-rendering="auto"/>
<rect x="264.0" y="547" width="1" height="1" fill="#C8E8E8"/>
<ellipse cx="270.5" cy="549" rx="2.45" ry="3.1" fill="#FF0000" shape-rendering="auto"/>
<rect x="269.0" y="547" width="1" height="1" fill="#C8E8E8"/>
<ellipse cx="275.5" cy="549" rx="2.45" ry="3.1" fill="#FF0000" shape-rendering="auto"/>
<rect x="274.0" y="547" width="1" height="1" fill="#C8E8E8"/>
<ellipse cx="280.5" cy="549" rx="2.45" ry="3.1" fill="#FF0000" shape-rendering="auto"/>
<rect x="279.0" y="547" width="1" height="1" fill="#C8E8E8"/>
<ellipse cx="285.5" cy="549" rx="2.45" ry="3.1" fill="#FF0000" shape-rendering="auto"/>
<rect x="284.0" y="547" width="1" height="1" fill="#C8E8E8"/>
<ellipse cx="291.5" cy="549" rx="2.45" ry="3.1" fill="#FF0000" shape-rendering="auto"/>
<rect x="290.0" y="547" width="1" height="1" fill="#C8E8E8"/>
<ellipse cx="296.5" cy="549" rx="2.45" ry="3.1" fill="#FF0000" shape-rendering="auto"/>
<rect x="295.0" y="547" width="1" height="1" fill="#C8E8E8"/>
<ellipse cx="301.5" cy="549" rx="2.45" ry="3.1" fill="#FF0000" shape-rendering="auto"/>
<rect x="300.0" y="547" width="1" height="1" fill="#C8E8E8"/>
<ellipse cx="306.5" cy="549" rx="2.45" ry="3.1" fill="#FF0000" shape-rendering="auto"/>
<rect x="305.0" y="547" width="1" height="1" fill="#C8E8E8"/>
<ellipse cx="311.5" cy="549" rx="2.45" ry="3.1" fill="#FF0000" shape-rendering="auto"/>
<rect x="310.0" y="547" width="1" height="1" fill="#C8E8E8"/>
<ellipse cx="316.5" cy="549" rx="2.45" ry="3.1" fill="#FF0000" shape-rendering="auto"/>
<rect x="315.0" y="547" width="1" height="1" fill="#C8E8E8"/>
<ellipse cx="321.5" cy="549" rx="2.45" ry="3.1" fill="#FF0000" shape-rendering="auto"/>
<rect x="320.0" y="547" width="1" height="1" fill="#C8E8E8"/>
<ellipse cx="326.5" cy="549" rx="2.45" ry="3.1" fill="#FF0000" shape-rendering="auto"/>
<rect x="325.0" y="547" width="1" height="1" fill="#C8E8E8"/>
<ellipse cx="331.5" cy="549" rx="2.45" ry="3.1" fill="#FF0000" shape-rendering="auto"/>
<rect x="330.0" y="547" width="1" height="1" fill="#C8E8E8"/>
<ellipse cx="336.5" cy="549" rx="2.45" ry="3.1" fill="#FF0000" shape-rendering="auto"/>
<rect x="335.0" y="547" width="1" height="1" fill="#C8E8E8"/>
<ellipse cx="341.5" cy="549" rx="2.45" ry="3.1" fill="#FF0000" shape-rendering="auto"/>
<rect x="340.0" y="547" width="1" height="1" fill="#C8E8E8"/>
<ellipse cx="346.5" cy="549" rx="2.45" ry="3.1" fill="#FF0000" shape-rendering="auto"/>
<rect x="345.0" y="547" width="1" height="1" fill="#C8E8E8"/>
<ellipse cx="351.5" cy="549" rx="2.45" ry="3.1" fill="#FF0000" shape-rendering="auto"/>
<rect x="350.0" y="547" width="1" height="1" fill="#C8E8E8"/>
<ellipse cx="356.5" cy="549" rx="2.45" ry="3.1" fill="#FF0000" shape-rendering="auto"/>
<rect x="355.0" y="547" width="1" height="1" fill="#C8E8E8"/>
<ellipse cx="361.5" cy="549" rx="2.45" ry="3.1" fill="#FF0000" shape-rendering="auto"/>
<rect x="360.0" y="547" width="1" height="1" fill="#C8E8E8"/>
<ellipse cx="366.5" cy="549" rx="2.45" ry="3.1" fill="#FF0000" shape-rendering="auto"/>
<rect x="365.0" y="547" width="1" height="1" fill="#C8E8E8"/>
<ellipse cx="371.5" cy="549" rx="2.45" ry="3.1" fill="#FF0000" shape-rendering="auto"/>
<rect x="370.0" y="547" width="1" height="1" fill="#C8E8E8"/>
<ellipse cx="376.5" cy="549" rx="2.45" ry="3.1" fill="#FF0000" shape-rendering="auto"/>
<rect x="375.0" y="547" width="1" height="1" fill="#C8E8E8"/>
<ellipse cx="381.5" cy="549" rx="2.45" ry="3.1" fill="#FF0000" shape-rendering="auto"/>
<rect x="380.0" y="547" width="1" height="1" fill="#C8E8E8"/>
<ellipse cx="386.5" cy="549" rx="2.45" ry="3.1" fill="#FF0000" shape-rendering="auto"/>
<rect x="385.0" y="547" width="1" height="1" fill="#C8E8E8"/>
<ellipse cx="391.5" cy="549" rx="2.45" ry="3.1" fill="#FF0000" shape-rendering="auto"/>
<rect x="390.0" y="547" width="1" height="1" fill="#C8E8E8"/>
<ellipse cx="396.5" cy="549" rx="2.45" ry="3.1" fill="#FF0000" shape-rendering="auto"/>
<rect x="395.0" y="547" width="1" height="1" fill="#C8E8E8"/>
<ellipse cx="401.5" cy="549" rx="2.45" ry="3.1" fill="#FF0000" shape-rendering="auto"/>
<rect x="400.0" y="547" width="1" height="1" fill="#C8E8E8"/>
<ellipse cx="406.5" cy="549" rx="2.45" ry="3.1" fill="#FF0000" shape-rendering="auto"/>
<rect x="405.0" y="547" width="1" height="1" fill="#C8E8E8"/>
<ellipse cx="411.5" cy="549" rx="2.45" ry="3.1" fill="#FF0000" shape-rendering="auto"/>
<rect x="410.0" y="547" width="1" height="1" fill="#C8E8E8"/>
<ellipse cx="416.5" cy="549" rx="2.45" ry="3.1" fill="#FF0000" shape-rendering="auto"/>
<rect x="415.0" y="547" width="1" height="1" fill="#C8E8E8"/>
<ellipse cx="421.5" cy="549" rx="2.45" ry="3.1" fill="#FF0000" shape-rendering="auto"/>
<rect x="420.0" y="547" width="1" height="1" fill="#C8E8E8"/>
<ellipse cx="426.5" cy="549" rx="2.45" ry="3.1" fill="#FF0000" shape-rendering="auto"/>
<rect x="425.0" y="547" width="1" height="1" fill="#C8E8E8"/>
<ellipse cx="431.5" cy="549" rx="2.45" ry="3.1" fill="#FF0000" shape-rendering="auto"/>
<rect x="430.0" y="547" width="1" height="1" fill="#C8E8E8"/>
<ellipse cx="436.5" cy="549" rx="2.45" ry="3.1" fill="#FF0000" shape-rendering="auto"/>
<rect x="435.0" y="547" width="1" height="1" fill="#C8E8E8"/>
<ellipse cx="441.5" cy="549" rx="2.45" ry="3.1" fill="#FF0000" shape-rendering="auto"/>
<rect x="440.0" y="547" width="1" height="1" fill="#C8E8E8"/>
<ellipse cx="446.5" cy="549" rx="2.45" ry="3.1" fill="#FF0000" shape-rendering="auto"/>
<rect x="445.0" y="547" width="1" height="1" fill="#C8E8E8"/>
<ellipse cx="451.5" cy="549" rx="2.45" ry="3.1" fill="#FF0000" shape-rendering="auto"/>
<rect x="450.0" y="547" width="1" height="1" fill="#C8E8E8"/>
<ellipse cx="456.5" cy="549" rx="2.45" ry="3.1" fill="#FF0000" shape-rendering="auto"/>
<rect x="455.0" y="547" width="1" height="1" fill="#C8E8E8"/>
<ellipse cx="461.5" cy="549" rx="2.45" ry="3.1" fill="#FF0000" shape-rendering="auto"/>
<rect x="460.0" y="547" width="1" height="1" fill="#C8E8E8"/>
<ellipse cx="466.5" cy="549" rx="2.45" ry="3.1" fill="#FF0000" shape-rendering="auto"/>
<rect x="465.0" y="547" width="1" height="1" fill="#C8E8E8"/>
<ellipse cx="472.5" cy="549" rx="2.45" ry="3.1" fill="#FF0000" shape-rendering="auto"/>
<rect x="471.0" y="547" width="1" height="1" fill="#C8E8E8"/>
<ellipse cx="477.5" cy="549" rx="2.45" ry="3.1" fill="#FF0000" shape-rendering="auto"/>
<rect x="476.0" y="547" width="1" height="1" fill="#C8E8E8"/>
<ellipse cx="482.5" cy="549" rx="2.45" ry="3.1" fill="#FF0000" shape-rendering="auto"/>
<rect x="481.0" y="547" width="1" height="1" fill="#C8E8E8"/>
<ellipse cx="487.5" cy="549" rx="2.45" ry="3.1" fill="#FF0000" shape-rendering="auto"/>
<rect x="486.0" y="547" width="1" height="1" fill="#C8E8E8"/>
<ellipse cx="492.5" cy="549" rx="2.45" ry="3.1" fill="#FF0000" shape-rendering="auto"/>
<rect x="491.0" y="547" width="1" height="1" fill="#C8E8E8"/>
<ellipse cx="497.5" cy="549" rx="2.45" ry="3.1" fill="#FF0000" shape-rendering="auto"/>
<rect x="496.0" y="547" width="1" height="1" fill="#C8E8E8"/>
<ellipse cx="502.5" cy="549" rx="2.45" ry="3.1" fill="#FF0000" shape-rendering="auto"/>
<rect x="501.0" y="547" width="1" height="1" fill="#C8E8E8"/>
<ellipse cx="507.5" cy="549" rx="2.45" ry="3.1" fill="#FF0000" shape-rendering="auto"/>
<rect x="506.0" y="547" width="1" height="1" fill="#C8E8E8"/>
<ellipse cx="512.5" cy="549" rx="2.45" ry="3.1" fill="#FF0000" shape-rendering="auto"/>
<rect x="511.0" y="547" width="1" height="1" fill="#C8E8E8"/>
<ellipse cx="517.5" cy="549" rx="2.45" ry="3.1" fill="#FF0000" shape-rendering="auto"/>
<rect x="516.0" y="547" width="1" height="1" fill="#C8E8E8"/>
<ellipse cx="522.5" cy="549" rx="2.45" ry="3.1" fill="#FF0000" shape-rendering="auto"/>
<rect x="521.0" y="547" width="1" height="1" fill="#C8E8E8"/>
<ellipse cx="527.5" cy="549" rx="2.45" ry="3.1" fill="#FF0000" shape-rendering="auto"/>
<rect x="526.0" y="547" width="1" height="1" fill="#C8E8E8"/>
<ellipse cx="532.5" cy="549" rx="2.45" ry="3.1" fill="#FF0000" shape-rendering="auto"/>
<rect x="531.0" y="547" width="1" height="1" fill="#C8E8E8"/>
<rect x="34" y="597" width="3" height="1" fill="#FF0000" />
<rect x="39" y="597" width="3" height="1" fill="#FF0000" />
<rect x="44" y="597" width="3" height="1" fill="#FF0000" />
<rect x="49" y="596" width="3" height="2" fill="#FF0000" />
<rect x="54" y="596" width="3" height="2" fill="#FF0000" />
<rect x="59" y="596" width="3" height="2" fill="#FF0000" />
<rect x="64" y="596" width="3" height="2" fill="#FF0000" />
<rect x="69.5" y="595.5" width="2" height="3" fill="#000" stroke="#FF0000" stroke-width="1"/>
<rect x="74.5" y="595.5" width="2" height="3" fill="#000" stroke="#FF0000" stroke-width="1"/>
<rect x="79" y="596" width="3" height="2" fill="#FF0000" />
<rect x="84" y="597" width="3" height="1" fill="#FF0000" />
<rect x="99" y="599" width="3" height="1" fill="#00FFFF" />
<rect x="109" y="599" width="3" height="1" fill="#00FFFF" />
<rect x="115" y="599" width="3" height="2" fill="#00FFFF" />
<rect x="120" y="599" width="3" height="2" fill="#00FFFF" />
<rect x="125" y="599" width="3" height="2" fill="#00FFFF" />
<rect x="130" y="599" width="3" height="3" fill="#00FFFF" />
<rect x="135.5" y="598.5" width="2" height="3" fill="#000" stroke="#00FFFF" stroke-width="1"/>
<rect x="140" y="599" width="3" height="2" fill="#00FFFF" />
<rect x="145" y="599" width="3" height="1" fill="#00FFFF" />
<rect x="150" y="599" width="3" height="1" fill="#00FFFF" />
<rect x="155" y="599" width="3" height="1" fill="#00FFFF" />
<rect x="170" y="597" width="3" height="1" fill="#FF0000" />
<rect x="175" y="597" width="3" height="1" fill="#FF0000" />
<rect x="180" y="597" width="3" height="1" fill="#FF0000" />
<rect x="185" y="597" width="3" height="1" fill="#FF0000" />
<rect x="190" y="597" width="3" height="1" fill="#FF0000" />
<rect x="195" y="596" width="3" height="2" fill="#FF0000" />
<rect x="200" y="596" width="3" height="2" fill="#FF0000" />
<rect x="205" y="596" width="3" height="2" fill="#FF0000" />
<rect x="210" y="596" width="3" height="2" fill="#FF0000" />
<rect x="215.5" y="595.5" width="2" height="3" fill="#000" stroke="#FF0000" stroke-width="1"/>
<rect x="220" y="595" width="3" height="3" fill="#FF0000" />
<rect x="225.5" y="595.5" width="2" height="3" fill="#000" stroke="#FF0000" stroke-width="1"/>
<rect x="230.5" y="595.5" width="2" height="3" fill="#000" stroke="#FF0000" stroke-width="1"/>
<rect x="235.5" y="594.5" width="2" height="4" fill="#000" stroke="#FF0000" stroke-width="1"/>
<rect x="240.5" y="593.5" width="2" height="5" fill="#000" stroke="#FF0000" stroke-width="1"/>
<rect x="245.5" y="592.5" width="2" height="6" fill="#000" stroke="#FF0000" stroke-width="1"/>
<rect x="250.5" y="592.5" width="2" height="6" fill="#000" stroke="#FF0000" stroke-width="1"/>
<rect x="255.5" y="590.5" width="2" height="8" fill="#000" stroke="#FF0000" stroke-width="1"/>
<rect x="260.5" y="590.5" width="2" height="8" fill="#000" stroke="#FF0000" stroke-width="1"/>
<rect x="265" y="591" width="3" height="7" fill="#FF0000" />
<rect x="270" y="594" width="3" height="4" fill="#FF0000" />
<rect x="275" y="596" width="3" height="2" fill="#FF0000" />
<rect x="285" y="599" width="3" height="2" fill="#00FFFF" />
<rect x="291" y="599" width="3" height="2" fill="#00FFFF" />
<rect x="296" y="599" width="3" height="2" fill="#00FFFF" />
<rect x="316" y="597" width="3" height="1" fill="#FF0000" />
<rect x="326" y="596" width="3" height="2" fill="#FF0000" />
<rect x="331" y="596" width="3" height="2" fill="#FF0000" />
<rect x="336.5" y="593.5" width="2" height="5" fill="#000" stroke="#FF0000" stroke-width="1"/>
<rect x="341.5" y="592.5" width="2" height="6" fill="#000" stroke="#FF0000" stroke-width="1"/>
<rect x="346.5" y="591.5" width="2" height="7" fill="#000" stroke="#FF0000" stroke-width="1"/>
<rect x="351.5" y="590.5" width="2" height="8" fill="#000" stroke="#FF0000" stroke-width="1"/>
<rect x="356.5" y="588.5" width="2" height="10" fill="#000" stroke="#FF0000" stroke-width="1"/>
<rect x="361.5" y="585.5" width="2" height="13" fill="#000" stroke="#FF0000" stroke-width="1"/>
<rect x="366.5" y="585.5" width="2" height="13" fill="#000" stroke="#FF0000" stroke-width="1"/>
<rect x="371.5" y="585.5" width="2" height="13" fill="#000" stroke="#FF0000" stroke-width="1"/>
<rect x="376.5" y="585.5" width="2" height="13" fill="#000" stroke="#FF0000" stroke-width="1"/>
<rect x="381" y="587" width="3" height="11" fill="#FF0000" />
<rect x="386" y="590" width="3" height="8" fill="#FF0000" />
<rect x="391" y="591" width="3" height="7" fill="#FF0000" />
<rect x="396.5" y="588.5" width="2" height="10" fill="#000" stroke="#FF0000" stroke-width="1"/>
<rect x="401.5" y="588.5" width="2" height="10" fill="#000" stroke="#FF0000" stroke-width="1"/>
<rect x="406.5" y="585.5" width="2" height="13" fill="#000" stroke="#FF0000" stroke-width="1"/>
<rect x="411" y="585" width="3" height="13" fill="#FF0000" />
<rect x="416" y="588" width="3" height="10" fill="#FF0000" />
<rect x="421.5" y="584.5" width="2" height="14" fill="#000" stroke="#FF0000" stroke-width="1"/>
<rect x="426.5" y="582.5" width="2" height="16" fill="#000" stroke="#FF0000" stroke-width="1"/>
<rect x="431" y="584" width="3" height="14" fill="#FF0000" />
<rect x="436" y="584" width="3" height="14" fill="#FF0000" />
<rect x="441.5" y="585.5" width="2" height="13" fill="#000" stroke="#FF0000" stroke-width="1"/>
<rect x="446" y="587" width="3" height="11" fill="#FF0000" />
<rect x="451" y="590" width="3" height="8" fill="#FF0000" />
<rect x="456" y="594" width="3" height="4" fill="#FF0000" />
<rect x="461.5" y="590.5" width="2" height="8" fill="#000" stroke="#FF0000" stroke-width="1"/>
<rect x="466.5" y="587.5" width="2" height="11" fill="#000" stroke="#FF0000" stroke-width="1"/>
<rect x="472" y="591" width="3" height="7" fill="#FF0000" />
<rect x="482" y="599" width="3" height="10" fill="#00FFFF" />
<rect x="487" y="599" width="3" height="23" fill="#00FFFF" />
<rect x="492" y="599" width="3" height="28" fill="#00FFFF" />
<rect x="497" y="599" width="3" height="36" fill="#00FFFF" />
<rect x="502" y="599" width="3" height="39" fill="#00FFFF" />
<rect x="507.5" y="598.5" width="2" height="38" fill="#000" stroke="#00FFFF" stroke-width="1"/>
<rect x="512.5" y="598.5" width="2" height="34" fill="#000" stroke="#00FFFF" stroke-width="1"/>
<rect x="517.5" y="598.5" width="2" height="25" fill="#000" stroke="#00FFFF" stroke-width="1"/>
<rect x="522.5" y="598.5" width="2" height="24" fill="#000" stroke="#00FFFF" stroke-width="1"/>
<rect x="527.5" y="598.5" width="2" height="23" fill="#000" stroke="#00FFFF" stroke-width="1"/>
<rect x="532.5" y="598.5" width="2" height="21" fill="#000" stroke="#00FFFF" stroke-width="1"/>
<rect x="0" y="598" width="537" height="1" fill="#B0B0B0" />
<polyline points="0.0,597.0 20.0,596.8 40.0,596.0 60.0,595.0 80.0,594.5 100.0,595.5 130.0,597.0 170.0,596.5 191.0,595.0 211.4,593.0 231.8,591.0 252.1,588.0 264.9,585.0 277.6,585.0 290.0,586.2 310.5,587.8 330.9,586.3 351.2,582.0 371.6,576.9 392.0,571.0 412.3,565.4 420.0,564.0 433.4,558.4 446.7,554.6 460.1,551.7 473.5,550.0 482.4,551.0 491.3,556.0 500.2,565.0 509.1,574.0 518.0,579.5 526.9,584.4 532.5,587.8" fill="none" stroke="#00FF00" stroke-width="1.1" shape-rendering="auto"/>
<polyline points="0.0,596.5 20.0,596.0 40.0,595.0 60.0,593.5 75.0,593.0 90.0,594.0 110.0,596.0 130.0,597.0 170.0,596.0 191.0,593.6 211.4,591.8 231.8,589.3 252.1,586.0 264.9,582.9 277.6,584.2 290.0,586.7 295.3,587.6 310.5,587.6 325.8,585.8 341.1,582.0 356.3,577.7 371.6,570.5 381.8,567.5 392.0,566.7 402.1,564.2 412.3,559.8 422.5,555.8 426.7,551.7 433.4,548.8 442.3,548.0 451.2,550.0 460.1,548.8 466.8,545.7 473.5,546.0 480.1,551.7 486.8,564.0 493.5,575.0 500.2,585.0 506.9,591.8 513.5,593.4 520.2,593.4 526.9,596.2 533.6,598.0" fill="none" stroke="#FFFF00" stroke-width="2" stroke-linejoin="round" shape-rendering="auto"/>
<path d="M9.5 587.8 h2 v4 h3.2 L10.5 596.2 L6.3 591.8 h3.2 Z" fill="#00FF00" shape-rendering="auto"/>
<path d="M49.5 585.9 h2 v4 h3.2 L50.5 594.3 L46.3 589.9 h3.2 Z" fill="#00FF00" shape-rendering="auto"/>
<path d="M79.5 586.6 h2 v4 h3.2 L80.5 595 L76.3 590.6 h3.2 Z" fill="#00FF00" shape-rendering="auto"/>
<path d="M200.5 587.4 h2 v4 h3.2 L201.5 595.8 L197.3 591.4 h3.2 Z" fill="#00FF00" shape-rendering="auto"/>
<path d="M220.5 585.6 h2 v4 h3.2 L221.5 594 L217.3 589.6 h3.2 Z" fill="#00FF00" shape-rendering="auto"/>
<path d="M265.5 581.6 h2 v4 h3.2 L266.5 590 L262.3 585.6 h3.2 Z" fill="#00FF00" shape-rendering="auto"/>
<path d="M381.6 578.6 h2 v4 h3.2 L382.6 587 L378.4 582.6 h3.2 Z" fill="#00FF00" shape-rendering="auto"/>
<path d="M411.8 576.1 h2 v4 h3.2 L412.8 584.5 L408.6 580.1 h3.2 Z" fill="#00FF00" shape-rendering="auto"/>
<path d="M431.9 576.1 h2 v4 h3.2 L432.9 584.5 L428.7 580.1 h3.2 Z" fill="#00FF00" shape-rendering="auto"/>
<path d="M472.1 582.3 h2 v4 h3.2 L473.1 590.7 L468.9 586.3 h3.2 Z" fill="#00FF00" shape-rendering="auto"/>
<path d="M135.3 608.2 h2 v-4 h3 L136.3 600 L132.3 604.2 h3 Z" fill="#FF0000" shape-rendering="auto"/>
<path d="M301.2 607.7 h2 v-4 h3 L302.2 599.5 L298.2 603.7 h3 Z" fill="#FF0000" shape-rendering="auto"/>
<path d="M507.3 644.7 h2 v-4 h3 L508.3 636.5 L504.3 640.7 h3 Z" fill="#FF0000" shape-rendering="auto"/>
<circle cx="95.8" cy="601.7" r="2.8" fill="#FFFF00" stroke="#C0C000" stroke-width="0.8" shape-rendering="auto"/>
<circle cx="94.9" cy="600.8" r="1" fill="#C0C0C0" shape-rendering="auto"/>
<circle cx="484" cy="613" r="2.8" fill="#FFFF00" stroke="#C0C000" stroke-width="0.8" shape-rendering="auto"/>
<circle cx="483.1" cy="612.1" r="1" fill="#C0C0C0" shape-rendering="auto"/>
<rect x="557" y="558" width="4" height="1" fill="#FF0000" />
<text x="596.2" y="561.3" fill="#00FFFF" font-size="10.5" text-anchor="end" class="ax"  stroke="#00FFFF" stroke-width="0.2">10<tspan dx="1.4">.</tspan><tspan dx="1.4">00</tspan></text>
<rect x="557" y="598" width="4" height="1" fill="#FF0000" />
<text x="596.2" y="601.3" fill="#00FFFF" font-size="10.5" text-anchor="end" class="ax"  stroke="#00FFFF" stroke-width="0.2">0<tspan dx="1.4">.</tspan><tspan dx="1.4">00</tspan></text>
<rect x="558" y="568" width="1" height="1" fill="#FF0000" />
<rect x="558" y="578" width="2" height="1" fill="#FF0000" />
<rect x="558" y="588" width="1" height="1" fill="#FF0000" />
</g>
<g id="rsi">
<polyline points="0.0,697.4 5.0,695.0 15.0,700.0 25.0,678.4 32.0,673.4 45.0,665.7 50.0,681.0 55.0,690.0 60.0,683.4 65.0,680.0 70.0,673.4 75.0,672.4 80.0,686.7 85.0,701.7 90.0,706.7 95.0,714.0 100.0,707.4 105.0,702.4 110.0,713.4 115.0,723.4 120.0,719.4 125.0,724.4 130.0,722.0 135.0,722.0 140.0,710.4 145.0,714.0 150.0,715.4 155.0,722.4 160.0,716.7 165.0,708.4 170.0,700.0 175.0,697.4 180.0,697.4 185.0,696.7 190.0,691.7 196.0,689.0 201.0,705.4 205.0,690.7 210.0,685.0 215.0,684.4 220.7,686.7 225.7,684.0 231.7,681.7 236.7,674.4 241.7,676.7 246.7,670.0 251.7,667.4 256.0,662.4 260.7,666.7 265.7,680.0 270.7,697.7 276.0,694.4 281.0,710.7 286.0,713.4 291.0,705.4 296.0,706.4 301.0,698.4 306.0,695.0 311.0,693.4 316.0,691.7 322.0,686.7 327.0,701.0 331.7,690.0 336.7,682.4 342.7,682.4 347.7,680.0 352.7,675.7 357.7,673.4 362.4,667.7 367.4,674.0 376.7,669.0 382.4,682.4 387.4,681.0 392.4,678.4 397.4,671.7 402.4,673.7 407.4,666.7 412.4,675.0 417.4,689.0 422.4,676.7 427.4,676.7 432.4,685.0 437.4,681.7 442.4,679.4 447.4,688.4 452.4,685.0 457.4,696.0 462.4,684.0 467.4,681.7 473.4,696.7 478.4,704.4 483.4,718.4 488.4,729.4 493.4,724.4 498.4,731.7 503.4,733.4 509.4,727.4 513.4,725.7 518.4,716.0 523.4,725.0 528.4,727.7 532.7,725.0" fill="none" stroke="#FF00FF" stroke-width="1.2" shape-rendering="auto"/>
<rect x="557" y="675" width="4" height="1" fill="#FF0000" />
<text x="596.2" y="678.3" fill="#00FFFF" font-size="10.5" text-anchor="end" class="ax"  stroke="#00FFFF" stroke-width="0.2">80</text>
<rect x="557" y="722" width="4" height="1" fill="#FF0000" />
<text x="596.2" y="725.3" fill="#00FFFF" font-size="10.5" text-anchor="end" class="ax"  stroke="#00FFFF" stroke-width="0.2">50</text>
<rect x="558" y="686" width="1" height="1" fill="#FF0000" />
<rect x="558" y="698" width="2" height="1" fill="#FF0000" />
<rect x="558" y="710" width="1" height="1" fill="#FF0000" />
<rect x="558" y="733" width="1" height="1" fill="#FF0000" />
<rect x="558" y="745" width="2" height="1" fill="#FF0000" />
<rect x="558" y="756" width="1" height="1" fill="#FF0000" />
</g>
<g id="vol">
<rect x="-0.5" y="845.5" width="2" height="26" fill="#000" stroke="#FF5050" stroke-width="1"/>
<rect x="4.5" y="847.5" width="2" height="24" fill="#000" stroke="#FF5050" stroke-width="1"/>
<rect x="9" y="859" width="3" height="13" fill="#40FFFF" />
<rect x="14" y="862" width="3" height="10" fill="#40FFFF" />
<rect x="19.5" y="851.5" width="2" height="20" fill="#000" stroke="#FF5050" stroke-width="1"/>
<rect x="24.5" y="834.5" width="2" height="37" fill="#000" stroke="#FF5050" stroke-width="1"/>
<rect x="29.5" y="856.5" width="2" height="15" fill="#000" stroke="#FF5050" stroke-width="1"/>
<rect x="34.5" y="851.5" width="2" height="20" fill="#000" stroke="#FF5050" stroke-width="1"/>
<rect x="39.5" y="828.5" width="2" height="43" fill="#000" stroke="#FF5050" stroke-width="1"/>
<rect x="44.5" y="830.5" width="2" height="41" fill="#000" stroke="#FF5050" stroke-width="1"/>
<rect x="49" y="848" width="3" height="24" fill="#40FFFF" />
<rect x="54" y="843" width="3" height="29" fill="#40FFFF" />
<rect x="59.5" y="848.5" width="2" height="23" fill="#000" stroke="#FF5050" stroke-width="1"/>
<rect x="64.5" y="843.5" width="2" height="28" fill="#000" stroke="#FF5050" stroke-width="1"/>
<rect x="69.5" y="837.5" width="2" height="34" fill="#000" stroke="#FF5050" stroke-width="1"/>
<rect x="74.5" y="837.5" width="2" height="34" fill="#000" stroke="#FF5050" stroke-width="1"/>
<rect x="79" y="837" width="3" height="35" fill="#40FFFF" />
<rect x="84" y="823" width="3" height="49" fill="#40FFFF" />
<rect x="89" y="803" width="3" height="69" fill="#40FFFF" />
<rect x="94" y="805" width="3" height="67" fill="#40FFFF" />
<rect x="99.5" y="779.5" width="2" height="92" fill="#000" stroke="#FF5050" stroke-width="1"/>
<rect x="104.5" y="806.5" width="2" height="65" fill="#000" stroke="#FF5050" stroke-width="1"/>
<rect x="109" y="826" width="3" height="46" fill="#40FFFF" />
<rect x="115" y="828" width="3" height="44" fill="#40FFFF" />
<rect x="120.5" y="853.5" width="2" height="18" fill="#000" stroke="#FF5050" stroke-width="1"/>
<rect x="125" y="844" width="3" height="28" fill="#40FFFF" />
<rect x="130.5" y="836.5" width="2" height="35" fill="#000" stroke="#FF5050" stroke-width="1"/>
<rect x="135.5" y="841.5" width="2" height="30" fill="#000" stroke="#FF5050" stroke-width="1"/>
<rect x="140.5" y="823.5" width="2" height="48" fill="#000" stroke="#FF5050" stroke-width="1"/>
<rect x="145" y="853" width="3" height="19" fill="#40FFFF" />
<rect x="150" y="851" width="3" height="21" fill="#40FFFF" />
<rect x="155" y="861" width="3" height="11" fill="#40FFFF" />
<rect x="160.5" y="860.5" width="2" height="11" fill="#000" stroke="#FF5050" stroke-width="1"/>
<rect x="165.5" y="841.5" width="2" height="30" fill="#000" stroke="#FF5050" stroke-width="1"/>
<rect x="170.5" y="829.5" width="2" height="42" fill="#000" stroke="#FF5050" stroke-width="1"/>
<rect x="175.5" y="810.5" width="2" height="61" fill="#000" stroke="#FF5050" stroke-width="1"/>
<rect x="180" y="843" width="3" height="29" fill="#40FFFF" />
<rect x="185.5" y="838.5" width="2" height="33" fill="#000" stroke="#FF5050" stroke-width="1"/>
<rect x="190.5" y="849.5" width="2" height="22" fill="#000" stroke="#FF5050" stroke-width="1"/>
<rect x="195.5" y="851.5" width="2" height="20" fill="#000" stroke="#FF5050" stroke-width="1"/>
<rect x="200" y="846" width="3" height="26" fill="#40FFFF" />
<rect x="205.5" y="849.5" width="2" height="22" fill="#000" stroke="#FF5050" stroke-width="1"/>
<rect x="210.5" y="850.5" width="2" height="21" fill="#000" stroke="#FF5050" stroke-width="1"/>
<rect x="215.5" y="850.5" width="2" height="21" fill="#000" stroke="#FF5050" stroke-width="1"/>
<rect x="220" y="850" width="3" height="22" fill="#40FFFF" />
<rect x="225.5" y="846.5" width="2" height="25" fill="#000" stroke="#FF5050" stroke-width="1"/>
<rect x="230.5" y="846.5" width="2" height="25" fill="#000" stroke="#FF5050" stroke-width="1"/>
<rect x="235.5" y="850.5" width="2" height="21" fill="#000" stroke="#FF5050" stroke-width="1"/>
<rect x="240" y="854" width="3" height="18" fill="#40FFFF" />
<rect x="245.5" y="851.5" width="2" height="20" fill="#000" stroke="#FF5050" stroke-width="1"/>
<rect x="250.5" y="847.5" width="2" height="24" fill="#000" stroke="#FF5050" stroke-width="1"/>
<rect x="255.5" y="852.5" width="2" height="19" fill="#000" stroke="#FF5050" stroke-width="1"/>
<rect x="260" y="866" width="3" height="6" fill="#40FFFF" />
<rect x="265" y="832" width="3" height="40" fill="#40FFFF" />
<rect x="270" y="810" width="3" height="62" fill="#40FFFF" />
<rect x="275.5" y="825.5" width="2" height="46" fill="#000" stroke="#FF5050" stroke-width="1"/>
<rect x="280" y="820" width="3" height="52" fill="#40FFFF" />
<rect x="285" y="829" width="3" height="43" fill="#40FFFF" />
<rect x="291.5" y="846.5" width="2" height="25" fill="#000" stroke="#FF5050" stroke-width="1"/>
<rect x="296" y="838" width="3" height="34" fill="#40FFFF" />
<rect x="301.5" y="850.5" width="2" height="21" fill="#000" stroke="#FF5050" stroke-width="1"/>
<rect x="306.5" y="844.5" width="2" height="27" fill="#000" stroke="#FF5050" stroke-width="1"/>
<rect x="311.5" y="841.5" width="2" height="30" fill="#000" stroke="#FF5050" stroke-width="1"/>
<rect x="316.5" y="860.5" width="2" height="11" fill="#000" stroke="#FF5050" stroke-width="1"/>
<rect x="321.5" y="849.5" width="2" height="22" fill="#000" stroke="#FF5050" stroke-width="1"/>
<rect x="326" y="838" width="3" height="34" fill="#40FFFF" />
<rect x="331.5" y="837.5" width="2" height="34" fill="#000" stroke="#FF5050" stroke-width="1"/>
<rect x="336.5" y="851.5" width="2" height="20" fill="#000" stroke="#FF5050" stroke-width="1"/>
<rect x="341.5" y="870.5" width="2" height="1" fill="#000" stroke="#FF5050" stroke-width="1"/>
<rect x="346.5" y="850.5" width="2" height="21" fill="#000" stroke="#FF5050" stroke-width="1"/>
<rect x="351.5" y="845.5" width="2" height="26" fill="#000" stroke="#FF5050" stroke-width="1"/>
<rect x="356.5" y="837.5" width="2" height="34" fill="#000" stroke="#FF5050" stroke-width="1"/>
<rect x="361.5" y="835.5" width="2" height="36" fill="#000" stroke="#FF5050" stroke-width="1"/>
<rect x="366" y="847" width="3" height="25" fill="#40FFFF" />
<rect x="371.5" y="840.5" width="2" height="31" fill="#000" stroke="#FF5050" stroke-width="1"/>
<rect x="376.5" y="849.5" width="2" height="22" fill="#000" stroke="#FF5050" stroke-width="1"/>
<rect x="381" y="855" width="3" height="17" fill="#40FFFF" />
<rect x="386.5" y="861.5" width="2" height="10" fill="#000" stroke="#FF5050" stroke-width="1"/>
<rect x="391.5" y="863.5" width="2" height="8" fill="#000" stroke="#FF5050" stroke-width="1"/>
<rect x="396.5" y="858.5" width="2" height="13" fill="#000" stroke="#FF5050" stroke-width="1"/>
<rect x="401" y="847" width="3" height="25" fill="#40FFFF" />
<rect x="406.5" y="844.5" width="2" height="27" fill="#000" stroke="#FF5050" stroke-width="1"/>
<rect x="411" y="847" width="3" height="25" fill="#40FFFF" />
<rect x="416" y="845" width="3" height="27" fill="#40FFFF" />
<rect x="421.5" y="848.5" width="2" height="23" fill="#000" stroke="#FF5050" stroke-width="1"/>
<rect x="426" y="857" width="3" height="15" fill="#40FFFF" />
<rect x="431" y="855" width="3" height="17" fill="#40FFFF" />
<rect x="436.5" y="859.5" width="2" height="12" fill="#000" stroke="#FF5050" stroke-width="1"/>
<rect x="441.5" y="862.5" width="2" height="9" fill="#000" stroke="#FF5050" stroke-width="1"/>
<rect x="446" y="864" width="3" height="8" fill="#40FFFF" />
<rect x="451.5" y="857.5" width="2" height="14" fill="#000" stroke="#FF5050" stroke-width="1"/>
<rect x="456" y="854" width="3" height="18" fill="#40FFFF" />
<rect x="461.5" y="848.5" width="2" height="23" fill="#000" stroke="#FF5050" stroke-width="1"/>
<rect x="466.5" y="856.5" width="2" height="15" fill="#000" stroke="#FF5050" stroke-width="1"/>
<rect x="472" y="863" width="3" height="9" fill="#40FFFF" />
<rect x="477" y="860" width="3" height="12" fill="#40FFFF" />
<rect x="482" y="859" width="3" height="13" fill="#40FFFF" />
<rect x="487" y="846" width="3" height="26" fill="#40FFFF" />
<rect x="492.5" y="854.5" width="2" height="17" fill="#000" stroke="#FF5050" stroke-width="1"/>
<rect x="497" y="816" width="3" height="56" fill="#40FFFF" />
<rect x="502" y="837" width="3" height="35" fill="#40FFFF" />
<rect x="507.5" y="826.5" width="2" height="45" fill="#000" stroke="#FF5050" stroke-width="1"/>
<rect x="512.5" y="847.5" width="2" height="24" fill="#000" stroke="#FF5050" stroke-width="1"/>
<rect x="517.5" y="828.5" width="2" height="43" fill="#000" stroke="#FF5050" stroke-width="1"/>
<rect x="522" y="830" width="3" height="42" fill="#40FFFF" />
<rect x="527" y="807" width="3" height="65" fill="#40FFFF" />
<rect x="532.5" y="826.5" width="2" height="45" fill="#000" stroke="#FF5050" stroke-width="1"/>
<polyline points="0.0,858.4 14.3,856.6 28.6,855.8 37.2,855.6 47.2,853.0 57.2,850.8 67.2,850.1 80.0,846.5 88.6,843.7 94.3,840.1 100.0,836.5 105.8,834.4 112.9,831.8 122.9,831.5 130.1,830.4 140.1,830.1 147.2,831.5 150.0,831.5 154.3,832.6 171.5,832.6 176.5,830.3 186.5,831.5 196.5,837.5 206.5,842.2 214.4,844.3 224.4,845.0 240.0,846.0 251.5,846.1 255.8,845.1 262.9,846.1 268.6,845.1 277.2,844.4 287.2,843.6 295.8,842.6 308.7,843.2 320.0,843.2 324.3,842.9 338.6,843.2 352.9,843.2 357.2,841.8 362.9,840.1 370.1,841.8 377.2,844.6 384.4,846.9 391.5,848.4 400.0,848.9 415.8,848.9 427.2,849.4 432.9,851.2 444.4,850.8 452.9,851.8 461.5,853.7 470.1,854.7 480.0,855.5 484.3,855.1 491.5,854.4 498.6,852.2 504.3,851.2 515.8,851.5 520.1,850.4 527.2,847.2 532.2,845.1" fill="none" stroke="#00FF00" stroke-width="1.1" shape-rendering="auto"/>
<polyline points="0.0,856.6 7.2,856.6 14.3,856.1 21.5,855.1 28.6,852.7 35.8,851.5 42.9,848.4 50.1,847.3 57.2,845.8 64.4,843.7 71.5,842.7 80.0,840.4 87.2,836.5 94.3,832.9 100.0,826.5 105.8,822.2 110.8,820.1 115.8,818.4 120.8,820.4 130.8,820.4 135.1,822.2 140.8,824.4 145.8,828.7 150.0,836.5 155.0,840.8 160.0,844.3 165.0,846.5 171.5,845.0 176.5,840.8 187.2,841.5 191.5,843.2 201.5,843.2 210.0,841.5 217.2,841.5 224.4,845.8 233.0,847.2 240.0,849.4 244.3,849.4 255.8,849.4 261.5,851.8 265.8,848.9 271.5,845.8 276.5,842.9 281.5,840.1 287.2,838.6 291.5,838.6 296.5,836.5 301.5,837.2 306.5,835.8 310.0,833.0 312.1,832.9 317.2,836.5 324.3,841.5 331.5,843.6 338.6,846.5 345.8,848.9 352.9,848.9 360.1,847.9 367.2,846.1 374.4,845.1 381.5,847.2 388.7,848.9 396.0,849.8 405.0,850.4 412.9,851.5 421.5,852.5 432.9,852.9 444.4,853.7 451.5,854.7 461.5,855.5 467.3,856.5 473.0,858.4 480.0,858.4 484.3,858.4 491.5,856.5 495.8,853.7 500.0,850.8 504.3,848.7 508.6,846.5 512.9,846.1 518.6,843.6 522.9,840.8 527.9,835.8 532.2,832.9" fill="none" stroke="#FF00FF" stroke-width="1.1" shape-rendering="auto"/>
<polyline points="0.0,855.1 5.7,851.5 10.7,852.7 16.5,855.8 21.5,852.7 26.5,851.5 31.5,852.7 35.8,850.8 41.5,843.2 45.8,840.4 50.8,842.7 55.8,840.1 60.1,839.4 65.1,841.5 70.1,844.4 75.1,843.0 80.1,840.1 85.7,835.8 90.0,828.7 94.3,822.9 98.6,812.9 102.9,805.0 106.5,803.2 110.8,804.3 115.8,809.3 120.8,820.1 124.3,829.4 129.4,836.5 135.1,840.8 140.1,839.4 145.8,839.4 150.0,841.5 155.7,845.8 161.4,849.4 166.5,853.6 171.5,848.6 176.5,840.0 181.5,837.5 186.5,832.2 191.5,835.0 196.5,838.6 201.5,845.0 206.5,847.5 211.5,849.4 221.5,849.4 227.3,848.6 230.0,848.0 244.3,849.0 254.3,849.4 257.9,851.8 261.5,854.7 265.8,850.1 271.5,842.2 276.5,835.8 281.5,830.1 286.5,823.6 291.5,825.8 296.5,832.2 301.5,837.2 306.5,842.2 311.5,845.1 315.7,846.5 321.4,849.4 326.5,846.9 331.5,845.1 336.5,846.5 341.5,848.9 346.5,849.8 351.5,851.5 357.2,851.5 361.5,849.4 366.5,844.4 371.5,842.2 376.5,842.6 381.5,845.1 386.5,850.1 391.5,853.7 394.3,855.8 398.6,857.2 403.6,857.2 408.6,855.1 413.6,851.5 417.9,847.9 422.2,846.5 427.2,847.9 432.2,850.8 437.2,853.7 442.2,856.5 447.2,859.1 452.2,859.4 457.2,859.4 462.2,857.2 467.3,856.1 480.0,856.1 484.3,856.5 491.5,856.1 494.3,853.7 497.2,847.2 500.0,844.4 504.3,842.2 507.9,836.5 513.6,836.5 518.6,831.5 522.9,832.9 527.9,827.5 532.9,827.5" fill="none" stroke="#FFFF00" stroke-width="1.1" shape-rendering="auto"/>
<rect x="558" y="806" width="3" height="1" fill="#FF0000" />
<text x="596.2" y="809.3" fill="#00FFFF" font-size="10.5" text-anchor="end" class="ax"  stroke="#00FFFF" stroke-width="0.2">400000</text>
<rect x="558" y="839" width="3" height="1" fill="#FF0000" />
<text x="596.2" y="842.3" fill="#00FFFF" font-size="10.5" text-anchor="end" class="ax"  stroke="#00FFFF" stroke-width="0.2">200000</text>
<rect x="558" y="872" width="3" height="1" fill="#FF0000" />
<text x="596.2" y="875.3" fill="#00FFFF" font-size="10.5" text-anchor="end" class="ax"  stroke="#00FFFF" stroke-width="0.2">0</text>
</g>
<g id="right">
<text x="601.5" y="22" fill="#00D8D8" font-size="17" text-anchor="start" class="song" >委比</text>
<text x="601.5" y="40" fill="#00D8D8" font-size="17" text-anchor="start" class="song" >卖⑤</text>
<text x="601.5" y="58" fill="#00D8D8" font-size="17" text-anchor="start" class="song" >卖④</text>
<text x="601.5" y="76" fill="#00D8D8" font-size="17" text-anchor="start" class="song" >卖③</text>
<text x="601.5" y="94" fill="#00D8D8" font-size="17" text-anchor="start" class="song" >卖②</text>
<text x="601.5" y="112" fill="#00D8D8" font-size="17" text-anchor="start" class="song" >卖①</text>
<rect x="599" y="23" width="4" height="2" fill="#FF5050" />
<rect x="604" y="23" width="3" height="2" fill="#FF5050" />
<rect x="608" y="23" width="9" height="2" fill="#FF5050" />
<rect x="618" y="23" width="11" height="2" fill="#FF5050" />
<rect x="599" y="114" width="30" height="1" fill="#C00000" />
<text x="601.5" y="130" fill="#FFFF00" font-size="17" text-anchor="start" class="song" font-weight="bold">最新</text>
<rect x="599" y="132" width="30" height="1" fill="#C00000" />
<text x="601.5" y="148" fill="#00D8D8" font-size="17" text-anchor="start" class="song" >买①</text>
<text x="601.5" y="166" fill="#00D8D8" font-size="17" text-anchor="start" class="song" >买②</text>
<text x="601.5" y="184.5" fill="#00D8D8" font-size="17" text-anchor="start" class="song" >买③</text>
<text x="601.5" y="202.5" fill="#00D8D8" font-size="17" text-anchor="start" class="song" >买④</text>
<text x="601.5" y="221" fill="#00D8D8" font-size="17" text-anchor="start" class="song" >买⑤</text>
<rect x="599" y="222" width="30" height="1" fill="#C00000" />
<text x="601.5" y="238" fill="#00D8D8" font-size="17" text-anchor="start" class="song" font-weight="bold">涨跌</text>
<text x="601.5" y="255.5" fill="#00D8D8" font-size="17" text-anchor="start" class="song" font-weight="bold">涨幅</text>
<text x="601.5" y="273.5" fill="#00D8D8" font-size="17" text-anchor="start" class="song" font-weight="bold">振幅</text>
<text x="601.5" y="291.5" fill="#00D8D8" font-size="17" text-anchor="start" class="song" >总手</text>
<text x="601.5" y="309.5" fill="#00D8D8" font-size="17" text-anchor="start" class="song" >总额</text>
<text x="601.5" y="327.5" fill="#00D8D8" font-size="17" text-anchor="start" class="song" >换手</text>
<text x="601.5" y="345.5" fill="#00D8D8" font-size="17" text-anchor="start" class="song" >分笔</text>
<text x="601.5" y="363.5" fill="#00D8D8" font-size="17" text-anchor="start" class="song" >外盘</text>
<rect x="600" y="347" width="29" height="2" fill="#FF5050" />
<rect x="599" y="365" width="30" height="1" fill="#C00000" />
<text x="602.5" y="383" fill="#C0C0C0" font-size="12.5" text-anchor="start" class="ax" font-weight="bold" style="letter-spacing:1.5px">14:5</text>
<text x="621.3" y="399.5" fill="#C0C0C0" font-size="10.5" text-anchor="start" class="ax" style="letter-spacing:1.6px" stroke="#C0C0C0" stroke-width="0.2">:5</text>
<rect x="599" y="403" width="1.3" height="1" fill="#FF0000" />
<rect x="603" y="403" width="1.3" height="1" fill="#FF0000" />
<rect x="607" y="403" width="1.3" height="1" fill="#FF0000" />
<rect x="611" y="403" width="1.3" height="1" fill="#FF0000" />
<rect x="615" y="403" width="1.3" height="1" fill="#FF0000" />
<rect x="619" y="403" width="1.3" height="1" fill="#FF0000" />
<rect x="623" y="403" width="1.3" height="1" fill="#FF0000" />
<rect x="627" y="403" width="1.3" height="1" fill="#FF0000" />
<text x="602.5" y="417.5" fill="#C0C0C0" font-size="12.5" text-anchor="start" class="ax" font-weight="bold" style="letter-spacing:1.5px">14:5</text>
<text x="621.3" y="435" fill="#C0C0C0" font-size="10.5" text-anchor="start" class="ax" style="letter-spacing:1.6px" stroke="#C0C0C0" stroke-width="0.2">:1</text>
<text x="621.3" y="453" fill="#C0C0C0" font-size="10.5" text-anchor="start" class="ax" style="letter-spacing:1.6px" stroke="#C0C0C0" stroke-width="0.2">:2</text>
<text x="621.3" y="471" fill="#C0C0C0" font-size="10.5" text-anchor="start" class="ax" style="letter-spacing:1.6px" stroke="#C0C0C0" stroke-width="0.2">:2</text>
<text x="621.3" y="489" fill="#C0C0C0" font-size="10.5" text-anchor="start" class="ax" style="letter-spacing:1.6px" stroke="#C0C0C0" stroke-width="0.2">:3</text>
<text x="621.3" y="507" fill="#C0C0C0" font-size="10.5" text-anchor="start" class="ax" style="letter-spacing:1.6px" stroke="#C0C0C0" stroke-width="0.2">:4</text>
<text x="621.3" y="525" fill="#C0C0C0" font-size="10.5" text-anchor="start" class="ax" style="letter-spacing:1.6px" stroke="#C0C0C0" stroke-width="0.2">:5</text>
<text x="621.3" y="543" fill="#C0C0C0" font-size="10.5" text-anchor="start" class="ax" style="letter-spacing:1.6px" stroke="#C0C0C0" stroke-width="0.2">:5</text>
<rect x="599" y="547" width="1.3" height="1" fill="#FF0000" />
<rect x="603" y="547" width="1.3" height="1" fill="#FF0000" />
<rect x="607" y="547" width="1.3" height="1" fill="#FF0000" />
<rect x="611" y="547" width="1.3" height="1" fill="#FF0000" />
<rect x="615" y="547" width="1.3" height="1" fill="#FF0000" />
<rect x="619" y="547" width="1.3" height="1" fill="#FF0000" />
<rect x="623" y="547" width="1.3" height="1" fill="#FF0000" />
<rect x="627" y="547" width="1.3" height="1" fill="#FF0000" />
<text x="602.5" y="561.5" fill="#C0C0C0" font-size="12.5" text-anchor="start" class="ax" font-weight="bold" style="letter-spacing:1.5px">14:5</text>
<text x="621.3" y="579" fill="#C0C0C0" font-size="10.5" text-anchor="start" class="ax" style="letter-spacing:1.6px" stroke="#C0C0C0" stroke-width="0.2">:1</text>
<text x="621.3" y="597" fill="#C0C0C0" font-size="10.5" text-anchor="start" class="ax" style="letter-spacing:1.6px" stroke="#C0C0C0" stroke-width="0.2">:2</text>
<text x="621.3" y="615" fill="#C0C0C0" font-size="10.5" text-anchor="start" class="ax" style="letter-spacing:1.6px" stroke="#C0C0C0" stroke-width="0.2">:3</text>
<text x="621.3" y="633" fill="#C0C0C0" font-size="10.5" text-anchor="start" class="ax" style="letter-spacing:1.6px" stroke="#C0C0C0" stroke-width="0.2">:3</text>
<text x="621.3" y="651" fill="#C0C0C0" font-size="10.5" text-anchor="start" class="ax" style="letter-spacing:1.6px" stroke="#C0C0C0" stroke-width="0.2">:4</text>
<text x="621.3" y="669" fill="#C0C0C0" font-size="10.5" text-anchor="start" class="ax" style="letter-spacing:1.6px" stroke="#C0C0C0" stroke-width="0.2">:5</text>
<text x="621.3" y="687" fill="#C0C0C0" font-size="10.5" text-anchor="start" class="ax" style="letter-spacing:1.6px" stroke="#C0C0C0" stroke-width="0.2">:5</text>
<rect x="599" y="691" width="1.3" height="1" fill="#FF0000" />
<rect x="603" y="691" width="1.3" height="1" fill="#FF0000" />
<rect x="607" y="691" width="1.3" height="1" fill="#FF0000" />
<rect x="611" y="691" width="1.3" height="1" fill="#FF0000" />
<rect x="615" y="691" width="1.3" height="1" fill="#FF0000" />
<rect x="619" y="691" width="1.3" height="1" fill="#FF0000" />
<rect x="623" y="691" width="1.3" height="1" fill="#FF0000" />
<rect x="627" y="691" width="1.3" height="1" fill="#FF0000" />
<text x="602.5" y="706" fill="#C0C0C0" font-size="12.5" text-anchor="start" class="ax" font-weight="bold" style="letter-spacing:1.5px">14:5</text>
<text x="621.3" y="723" fill="#C0C0C0" font-size="10.5" text-anchor="start" class="ax" style="letter-spacing:1.6px" stroke="#C0C0C0" stroke-width="0.2">:1</text>
<text x="621.3" y="741" fill="#C0C0C0" font-size="10.5" text-anchor="start" class="ax" style="letter-spacing:1.6px" stroke="#C0C0C0" stroke-width="0.2">:2</text>
<text x="621.3" y="759" fill="#C0C0C0" font-size="10.5" text-anchor="start" class="ax" style="letter-spacing:1.6px" stroke="#C0C0C0" stroke-width="0.2">:2</text>
<text x="621.3" y="777" fill="#C0C0C0" font-size="10.5" text-anchor="start" class="ax" style="letter-spacing:1.6px" stroke="#C0C0C0" stroke-width="0.2">:3</text>
<text x="621.3" y="795" fill="#C0C0C0" font-size="10.5" text-anchor="start" class="ax" style="letter-spacing:1.6px" stroke="#C0C0C0" stroke-width="0.2">:4</text>
<text x="621.3" y="813" fill="#C0C0C0" font-size="10.5" text-anchor="start" class="ax" style="letter-spacing:1.6px" stroke="#C0C0C0" stroke-width="0.2">:5</text>
<rect x="599" y="817" width="1.3" height="1" fill="#FF0000" />
<rect x="603" y="817" width="1.3" height="1" fill="#FF0000" />
<rect x="607" y="817" width="1.3" height="1" fill="#FF0000" />
<rect x="611" y="817" width="1.3" height="1" fill="#FF0000" />
<rect x="615" y="817" width="1.3" height="1" fill="#FF0000" />
<rect x="619" y="817" width="1.3" height="1" fill="#FF0000" />
<rect x="623" y="817" width="1.3" height="1" fill="#FF0000" />
<rect x="627" y="817" width="1.3" height="1" fill="#FF0000" />
<text x="602.5" y="831.5" fill="#C0C0C0" font-size="12.5" text-anchor="start" class="ax" font-weight="bold" style="letter-spacing:1.5px">14:5</text>
<rect x="599" y="835" width="1.3" height="1" fill="#FF0000" />
<rect x="603" y="835" width="1.3" height="1" fill="#FF0000" />
<rect x="607" y="835" width="1.3" height="1" fill="#FF0000" />
<rect x="611" y="835" width="1.3" height="1" fill="#FF0000" />
<rect x="615" y="835" width="1.3" height="1" fill="#FF0000" />
<rect x="619" y="835" width="1.3" height="1" fill="#FF0000" />
<rect x="623" y="835" width="1.3" height="1" fill="#FF0000" />
<rect x="627" y="835" width="1.3" height="1" fill="#FF0000" />
<text x="602.5" y="849.5" fill="#C0C0C0" font-size="12.5" text-anchor="start" class="ax" font-weight="bold" style="letter-spacing:1.5px">15:0</text>
<rect x="599" y="859" width="30" height="1" fill="#C00000" />
<rect x="599" y="876" width="30" height="1" fill="#C00000" />
<path d="M599.5 866 L603 876 M622.5 860 L621 876 M622.5 860 L627 876" stroke="#C00000" stroke-width="1" fill="none" shape-rendering="auto"/>
<text x="603" y="874.5" fill="#C0C0C0" font-size="15" text-anchor="start" class="song" >营</text>
</g>
</svg>
</body></html>
